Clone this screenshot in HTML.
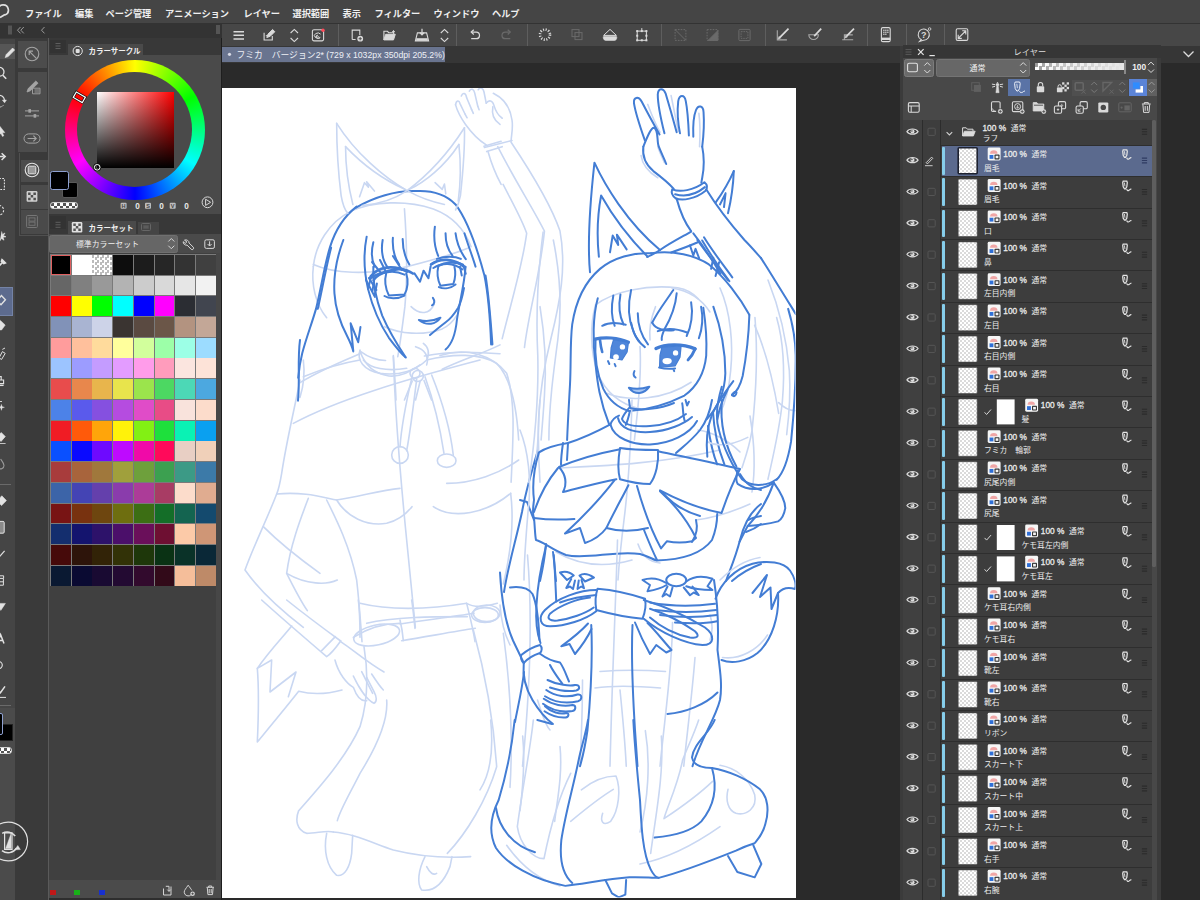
<!DOCTYPE html>
<html lang="ja"><head><meta charset="utf-8"><title>CLIP STUDIO PAINT</title>
<style>
html,body{margin:0;padding:0;background:#2a2a2a;}
body{width:1200px;height:900px;overflow:hidden;position:relative;font-family:"Liberation Sans",sans-serif;}
#app{position:absolute;left:0;top:0;width:1200px;height:900px;overflow:hidden;background:#2a2a2a;}
#app>div{position:absolute;box-sizing:border-box;}
svg{position:absolute;left:0;top:0;}
svg text{font-family:"Liberation Sans","Noto Sans CJK JP",sans-serif;}
</style></head><body>
<div id="app">
<div style="left:222px;top:88px;width:573.6px;height:809.6px;background:#ffffff;"></div>
<svg id="art" width="1200" height="900" viewBox="0 0 1200 900">
<defs><clipPath id="pg"><rect x="222" y="88" width="573.5" height="809.5"/></clipPath></defs>
<style>#art .lt path,#art .lt circle,#art .lt ellipse{fill:none;stroke:#c9d7f2;stroke-width:1.6;stroke-linecap:round;stroke-linejoin:round;vector-effect:non-scaling-stroke}#art .dk path,#art .dk circle,#art .dk ellipse{fill:none;stroke:#437dd4;stroke-width:2;stroke-linecap:round;stroke-linejoin:round;vector-effect:non-scaling-stroke}#art .md path{fill:none;stroke:#9fbcea;stroke-width:1.2;stroke-linecap:round;stroke-linejoin:round;vector-effect:non-scaling-stroke}</style>
<g clip-path="url(#pg)">
<!-- left figure head: tile origin (300,200) scale 1/4.5 -->
<g transform="translate(300 200) scale(.22222)">
<g class="lt">
<path d="M60,300 C70,200 130,100 230,50 C330,5 480,0 600,40 C680,70 740,130 770,210"/>
<path d="M60,300 C50,380 70,470 120,530"/>
<path d="M60,290 C150,330 300,340 480,300 C600,270 700,240 760,215"/>
<path d="M470,40 C478,150 488,300 472,480 C462,560 452,640 440,705"/>
<path d="M500,480 C540,520 585,512 602,472"/>
<path d="M380,570 C450,602 550,612 640,580 C670,565 690,545 705,520"/>
<path d="M270,680 C290,740 330,782 400,792 C450,797 500,772 540,742"/>
<path d="M270,680 C300,702 340,722 385,722"/>
<path d="M520,660 C560,672 582,702 570,742"/>
<circle cx="530" cy="792" r="25"/>
<path d="M0,822 C100,762 200,722 270,692"/>
<path d="M560,702 C650,682 760,680 900,692"/>
<path d="M640,762 C720,722 820,692 900,652"/>
<path d="M505,815 L470,900 M540,818 L520,900 M558,812 L592,900"/>
<path d="M420,700 C425,770 430,840 432,900"/>
</g>
<g class="dk">
<path d="M255,30 C200,72 160,132 135,212 C108,300 95,400 72,490 C52,560 28,620 10,690 C0,730 -5,765 -8,800"/>
<path d="M250,35 C330,-10 420,-45 530,-40 C600,-42 660,-20 700,20 C760,100 798,220 830,340 C848,430 856,540 860,650"/>
<path d="M745,300 C740,380 716,470 706,540 C700,600 682,650 655,673"/>
<path d="M195,180 C165,260 150,340 155,420 C160,500 190,570 212,612 C226,640 236,665 240,682 L228,555 L262,640 L272,572"/>
<path d="M300,165 C285,240 290,330 306,400 C326,480 360,560 400,620 C430,660 455,690 476,709"/>
<path d="M330,300 C326,370 340,440 370,520 C396,580 432,642 474,706"/>
<path d="M330,190 C320,230 322,270 336,300"/>
<path d="M372,180 C365,220 370,270 396,306"/>
<path d="M418,170 C415,215 425,260 446,290"/>
<path d="M462,175 C462,215 470,255 492,290"/>
<path d="M607,120 C600,170 605,210 622,252"/>
<path d="M655,150 C655,190 665,225 686,250"/>
<path d="M700,150 C705,190 720,230 746,266"/>
<path d="M740,150 C755,200 775,250 790,300"/>
<path d="M515,330 L540,368 L556,318 L578,352 L588,298"/>
<path d="M318,345 C350,300 420,290 482,322" style="stroke-width:2.8"/>
<path d="M330,362 C360,322 420,312 470,336"/>
<path d="M388,330 C380,360 385,400 400,430 L470,425 C486,400 488,360 478,330"/>
<path d="M380,432 C400,446 440,446 470,430"/>
<path d="M320,345 L306,400 M335,352 L326,410 M346,376 L336,430"/>
<path d="M590,290 C630,260 690,262 742,302" style="stroke-width:2.8"/>
<path d="M600,306 C640,280 690,282 730,312"/>
<path d="M622,300 C615,330 620,360 632,386 L690,378 C700,350 700,320 695,300"/>
<path d="M625,392 C650,402 680,396 700,380"/>
<path d="M735,295 L746,332 M720,300 L728,340"/>
<path d="M315,351 C360,328 405,315 450,310 C472,313 495,322 508,331" style="stroke-width:2.6"/>
<path d="M297,360 L337,436 M310,351 L344,405 M324,279 L364,328 M360,270 L387,324 M418,252 L459,315"/>
<path d="M621,297 C652,279 702,274 733,292" style="stroke-width:2.6"/>
<path d="M616,265 C652,252 697,252 724,265"/>
<path d="M738,396 C730,440 720,470 711,486 C690,520 670,540 657,549 C630,570 605,590 585,608"/>
<path d="M140,215 C118,300 100,400 80,490"/>
<path d="M835,340 C850,430 858,540 866,650"/>
<path d="M598,440 C607,452 607,468 594,474"/>
<path d="M535,540 C565,548 600,545 632,530 C612,560 570,568 535,540 Z"/>
</g>
</g>
<!-- left figure ears + raised hand (light): tile origin (300,80) scale 1/4.5 -->
<g transform="translate(300 80) scale(.22222)">
<g class="lt">
<path d="M165,195 C165,290 170,400 185,520 C192,560 202,585 215,600"/>
<path d="M165,195 C250,330 380,440 482,498 C540,530 600,550 650,560"/>
<path d="M205,300 C205,380 215,470 238,560"/>
<path d="M205,300 C300,400 400,460 472,492"/>
<path d="M740,215 C660,340 560,440 482,498 C420,540 340,560 280,565"/>
<path d="M740,215 C742,300 735,400 722,520 C716,550 708,570 700,585"/>
<path d="M715,290 C650,390 560,460 492,492"/>
<path d="M715,290 C725,380 722,470 712,545"/>
<path d="M268,525 L290,462 L308,482 L300,458 L335,500"/>
<path d="M608,462 L640,492 L650,468 L656,512"/>
<!-- hand -->
<path d="M700,112 C703,90 716,90 720,106 L742,152"/>
<path d="M726,72 C733,54 746,58 750,80 L772,132"/>
<path d="M762,50 C770,36 782,40 786,58 L800,118"/>
<path d="M802,44 C812,30 824,36 828,54 L838,104"/>
<path d="M700,112 C708,140 720,165 745,200 C770,235 800,268 838,292"/>
<path d="M838,104 C850,88 866,92 872,112 C880,140 892,160 910,172"/>
<path d="M868,120 C862,150 870,180 900,200"/>
<path d="M742,152 L752,170 M772,132 L780,150 M800,118 L806,134"/>
<path d="M828,298 L905,276 M840,322 L910,300"/>
<path d="M846,322 C860,372 878,420 905,470"/>
</g>
</g>
<!-- left figure body (light): tile origin (220,340) scale 1/3 -->
<g transform="translate(220 340) scale(.33333)">
<g class="lt">
<path d="M420,30 C410,60 430,90 480,100 C540,108 590,90 620,60 C630,40 625,20 610,10"/>
<path d="M430,60 C450,85 500,95 560,85"/>
<circle cx="585" cy="100" r="15"/>
<path d="M240,120 C225,200 200,300 185,400 C180,430 175,450 170,462"/>
<path d="M250,110 C300,90 360,70 420,60"/>
<path d="M620,60 C700,40 780,40 830,70 C870,110 890,200 896,300"/>
<path d="M220,250 C350,180 550,120 780,60"/>
<path d="M170,462 C250,455 300,470 350,480 C420,470 480,450 540,445"/>
<path d="M350,480 C380,530 440,560 500,550 C540,540 560,520 576,500"/>
<path d="M640,500 C700,540 800,520 872,460"/>
<path d="M680,430 C760,430 840,400 896,360"/>
<path d="M520,50 C525,200 540,400 560,600 C570,700 580,800 586,862"/>
<path d="M575,115 C560,180 545,250 540,320 M590,118 C580,200 570,280 560,332"/>
<circle cx="540" cy="345" r="25"/>
<path d="M615,110 C640,180 660,260 672,340 M635,105 C665,180 690,260 700,346"/>
<ellipse cx="680" cy="362" rx="28" ry="20"/>
<path d="M170,462 C140,540 100,620 75,690 C110,740 170,800 250,862"/>
<path d="M265,475 C240,540 210,620 200,700 C220,740 240,780 262,812"/>
<path d="M320,480 C350,540 390,620 410,720 C418,790 422,850 426,905"/>
<path d="M200,700 C260,735 320,735 352,720"/>
<path d="M872,460 C882,540 872,640 850,732"/>
<path d="M420,790 C500,810 620,810 740,790 C760,802 790,802 832,790"/>
<path d="M440,850 C520,830 640,830 742,830"/>
<ellipse cx="800" cy="820" rx="40" ry="25"/>
<path d="M400,892 C450,860 500,850 540,850"/>
<path d="M740,790 C750,830 760,870 765,905"/>
<path d="M250,60 C255,100 250,140 240,172"/>
<path d="M130,560 C170,600 230,650 300,700"/>
</g>
<g class="dk">
<path d="M240,0 C232,60 240,120 234,182"/>
</g>
</g>
<!-- misc (real coords) -->
<g class="dk">
<path d="M538,450 C532,470 526,490 522,512 C516,540 508,566 504,592"/>
<path d="M520,500 L527,502 L534,520"/>
<path d="M524,672 C522,690 518,706 515,722"/>
</g>
<!-- left figure lower body (light): tile origin (220,600) scale 1/3 -->
<g transform="translate(220 600) scale(.33333)">
<g class="lt">
<path d="M125,0 C180,50 250,110 320,170 C335,160 350,140 362,123"/>
<path d="M200,0 C250,40 310,85 362,123"/>
<path d="M305,152 L346,110"/>
<path d="M362,125 C400,150 445,190 492,216"/>
<path d="M345,180 C355,220 380,250 400,262 C410,290 425,305 440,302"/>
<path d="M400,228 C415,260 440,300 462,310 C472,305 470,290 462,275 L440,232"/>
<path d="M455,222 C470,245 482,262 490,270 M425,215 C438,240 448,262 458,280"/>
<path d="M215,78 C190,110 150,150 112,205 L155,180 L150,276 L228,216 L205,290"/>
<path d="M112,205 C118,280 115,360 112,426 C150,380 200,320 236,274 C280,285 330,280 366,270"/>
<path d="M415,0 C420,40 420,80 420,112"/>
<ellipse cx="470" cy="105" rx="70" ry="30" transform="rotate(-12 470 105)"/>
<path d="M540,72 C620,60 700,50 762,40 M545,122 C620,110 700,95 766,85"/>
<ellipse cx="795" cy="45" rx="40" ry="22"/>
<path d="M540,60 C545,80 548,100 550,122"/>
<path d="M575,0 C580,30 582,60 585,85"/>
<path d="M432,140 C445,220 445,300 420,380 C380,470 300,560 236,632 C225,660 230,690 260,700 C290,700 320,690 340,696"/>
<path d="M500,300 C505,360 470,440 420,520 C390,580 360,630 352,662"/>
<path d="M340,696 C400,700 460,730 520,750 C600,770 680,775 752,770"/>
<path d="M760,90 C790,200 820,350 830,500 C800,600 740,700 682,760"/>
<path d="M850,100 C870,250 880,400 870,562"/>
<path d="M320,700 C310,750 320,800 350,826 C375,830 390,800 395,760 L398,706"/>
<path d="M615,770 C595,810 590,850 605,870 C640,876 670,850 690,800 L696,770"/>
<path d="M620,800 C630,820 640,826 650,820"/>
</g>
</g>
<!-- left figure raised arm (light): tile origin (440,80) scale 1/2.25 -->
<g transform="translate(440 80) scale(.44444)">
<g class="lt">
<path d="M160,140 C200,200 250,280 270,340 C285,420 270,500 250,580 C235,640 225,700 222,760 C220,820 222,860 225,905"/>
<path d="M142,235 C165,280 185,315 195,345 C185,420 160,500 140,582"/>
<path d="M130,150 C165,220 210,290 235,340 C225,440 200,520 190,602"/>
<path d="M232,342 C222,420 215,520 220,620 C222,700 215,800 200,905"/>
<path d="M0,620 C60,600 120,620 150,660 C170,720 165,800 160,905"/>
<path d="M120,30 C140,40 158,60 162,90 C165,110 160,125 160,138"/>
<path d="M100,152 L162,136"/>
</g>
</g>
<!-- right figure raised hand, ears: tile origin (560,80) scale 1/4.5 -->
<g transform="translate(560 80) scale(.22222)">
<g class="lt">
<path d="M395,110 C410,150 430,200 450,235"/>
<path d="M500,70 C510,120 522,180 532,230"/>
<path d="M625,150 C632,200 630,260 628,300"/>
<path d="M365,340 C370,380 400,415 440,440"/>
<path d="M440,300 C450,330 460,350 470,372"/>
</g>
<g class="dk">
<path d="M382,272 C362,215 340,150 333,105 C330,78 352,70 368,98 C395,150 425,205 448,245"/>
<path d="M470,240 C455,180 440,110 440,65 C442,35 465,35 475,60 C490,110 510,180 525,235"/>
<path d="M540,240 C530,190 528,130 532,95 C538,65 560,65 566,95 C575,140 578,200 580,250"/>
<path d="M600,255 C598,210 602,160 612,135 C622,110 645,115 646,145 C650,200 645,260 640,300"/>
<path d="M375,300 C395,250 410,215 422,215 C442,220 436,260 442,292 C452,322 466,346 478,378"/>
<path d="M375,300 C370,340 385,380 420,410 C460,440 490,465 512,490"/>
<path d="M640,300 C650,350 648,400 640,440 L636,462"/>
<path d="M505,492 C540,506 600,498 650,460 C662,470 664,485 655,498 C610,535 550,545 520,532 C505,520 500,505 505,492"/>
<path d="M518,514 C560,526 610,516 652,482"/>
<path d="M525,535 C540,590 560,640 590,680"/>
<path d="M660,495 C700,560 760,640 830,720 C860,750 882,776 905,802"/>
<path d="M590,682 C560,700 500,730 450,765 C430,778 410,790 392,796"/>
<path d="M620,730 C580,748 540,762 500,776"/>
<path d="M585,745 L600,790 L610,760 L626,802"/>
<path d="M600,690 C640,740 680,800 722,872"/>
<path d="M640,722 C680,790 720,850 762,905"/>
<path d="M690,800 L680,850 M716,820 L700,882"/>
<!-- left ear -->
<path d="M135,865 C125,760 130,600 155,372 C200,470 300,640 450,765"/>
<path d="M175,795 C165,700 170,600 185,520 C230,600 300,700 395,796"/>
<path d="M225,775 L237,700 L262,742 L256,696 L300,762"/>
<!-- right ear -->
<path d="M782,410 C760,460 730,510 700,552"/>
<path d="M782,410 C780,470 770,540 756,600"/>
<path d="M745,510 L720,560 M745,510 L738,572"/>
</g>
</g>
<!-- right figure head: tile origin (540,240) scale 1/4.5 -->
<g transform="translate(540 240) scale(.22222)">
<g class="lt">
<path d="M250,292 C330,230 480,200 620,215 C660,222 690,240 712,265"/>
<path d="M250,292 C225,380 225,500 260,600 C290,680 360,740 450,760"/>
<path d="M450,480 C455,560 450,650 440,760 C436,800 430,850 425,900"/>
<path d="M300,690 C400,730 560,720 680,640"/>
<path d="M0,300 C20,420 30,560 20,700 C15,780 10,840 5,900"/>
<path d="M60,0 C90,150 100,300 80,450 C60,600 40,750 40,900"/>
<path d="M520,300 C500,350 490,400 495,450"/>
</g>
<g class="dk">
<path d="M500,60 C420,55 330,80 270,130 C200,190 160,280 145,380 C135,460 140,560 135,650 C130,740 125,820 122,900"/>
<path d="M500,60 C600,45 700,70 760,110 C830,165 900,260 942,336"/>
<path d="M260,262 C238,340 236,460 250,560 C258,640 268,720 312,832"/>
<path d="M250,445 C245,520 255,600 285,670 C310,720 350,755 402,770"/>
<path d="M402,770 C470,765 560,745 650,700 C705,660 740,600 748,520 C752,440 745,370 735,305"/>
<path d="M330,250 C320,300 322,350 336,386"/>
<path d="M362,245 C352,300 356,340 376,380"/>
<path d="M410,225 C395,290 395,350 420,410 C430,440 450,465 472,482"/>
<path d="M440,330 C440,380 455,430 486,470"/>
<path d="M410,372 C415,400 425,430 446,456"/>
<path d="M600,225 C570,270 530,320 505,372"/>
<path d="M615,240 C610,300 590,350 560,402 C552,420 545,436 548,450"/>
<path d="M505,372 C520,400 560,412 602,406"/>
<path d="M680,280 C690,330 680,390 660,432"/>
<path d="M725,300 C735,350 730,400 715,442"/>
<path d="M280,386 C310,370 350,372 386,381"/>
<path d="M530,410 C570,395 620,400 662,416"/>
<path d="M247,446 C290,436 350,438 398,460" style="stroke-width:3.2"/>
<path d="M270,450 C272,470 276,490 280,504" style="stroke-width:2.6"/>
<path d="M331,448 L398,461 L392,504 L369,540 L317,531 L320,486 Z" style="fill:#4f86da;stroke-width:1.2"/>
<path d="M306,545 L312,558 M336,558 L340,568"/>
<path d="M522,488 C560,468 640,464 698,490" style="stroke-width:3.4"/>
<path d="M698,490 C690,510 678,528 666,540" style="stroke-width:2.8"/>
<path d="M549,482 L635,477 L630,527 L608,567 L538,572 L540,518 Z" style="fill:#4f86da;stroke-width:1.2"/>
<path d="M536,574 C560,580 590,580 608,578 M600,580 L604,590"/>
<path d="M425,590 C420,600 420,612 430,619"/>
<path d="M400,665 C430,673 460,671 492,660 C470,692 430,702 400,665 Z" style="fill:#a8c6f2"/>
<path d="M405,768 C400,790 396,810 386,832"/>
<path d="M640,735 C645,760 642,790 652,816"/>
<path d="M655,720 L662,745 L670,728"/>
</g>
<g style="fill:#fff;stroke:none"><circle cx="371" cy="481" r="12"/><circle cx="342" cy="527" r="13"/><circle cx="610" cy="508" r="12"/><ellipse cx="572" cy="545" rx="21" ry="14"/></g>
</g>
<!-- right figure raised arm + right hair: tile origin (640,200) scale 1/3.75 -->
<g transform="translate(640 200) scale(.26667)">
<g class="lt">
<path d="M300,330 C340,420 350,540 340,640 C335,700 320,760 300,800"/>
<path d="M480,300 C520,400 550,520 560,640 C565,720 560,800 550,880"/>
<path d="M430,470 C470,560 500,680 520,800"/>
<path d="M120,330 C180,340 230,370 262,420"/>
<path d="M520,760 C540,780 560,790 582,790"/>
</g>
<g class="dk">
<path d="M410,432 C408,500 400,580 385,660 C375,700 360,722 345,732"/>
<path d="M454,218 C490,275 530,340 550,372 C562,392 574,410 584,428"/>
<path d="M275,400 C300,470 320,560 320,650 C318,720 290,780 250,822"/>
<path d="M215,150 C250,200 290,250 330,300 M240,140 C270,190 310,240 346,290"/>
<path d="M345,730 C352,720 360,715 362,722 C360,735 352,740 345,730 Z"/>
</g>
</g>
<!-- right figure collar, bow, cape: tile origin (520,400) scale 1/5 -->
<g transform="translate(520 400) scale(.2)">
<g class="lt">
<path d="M560,0 C555,200 545,400 520,600 C505,720 495,820 490,900"/>
<path d="M0,150 C40,250 60,400 40,560 C30,680 20,800 20,900"/>
<path d="M100,0 C90,100 95,200 80,300"/>
<path d="M200,340 C400,330 700,320 1000,250"/>
<path d="M880,600 C960,590 1060,560 1150,520"/>
<path d="M1150,80 C1170,200 1180,330 1160,460"/>
<path d="M180,760 C300,830 420,840 560,800"/>
<path d="M590,720 C610,780 650,810 700,815"/>
<path d="M890,150 C960,160 1040,200 1100,260"/>
</g>
<g class="dk">
<path d="M545,0 L550,40 C600,55 700,45 770,15"/>
<path d="M545,40 C530,60 515,75 510,95 C520,125 570,135 650,130 C730,125 790,100 830,70"/>
<path d="M490,90 C500,140 560,165 650,160 C740,155 820,120 860,85"/>
<path d="M495,78 C475,85 460,100 452,122 C470,190 560,225 650,222 C750,218 850,170 885,105"/>
<path d="M452,122 C400,150 320,190 240,215 C180,225 130,237 95,262 C70,340 60,420 70,500 C65,540 60,570 70,590"/>
<path d="M215,215 C210,250 205,290 205,322 M240,215 L235,300"/>
<path d="M190,340 C140,400 100,470 70,560"/>
<path d="M70,590 C140,600 200,600 272,595"/>
<path d="M70,590 C75,640 75,680 80,700 C120,710 160,750 230,775 C330,800 480,750 600,770 C640,780 660,795 682,802 C780,800 900,780 960,700 C980,650 986,600 986,570"/>
<!-- knot -->
<path d="M500,240 C490,300 490,360 500,396 C550,410 600,420 650,420 C680,380 695,310 690,250 C640,250 560,250 500,240 Z"/>
<!-- left loop -->
<path d="M500,246 C400,265 290,295 195,335 C230,375 235,420 215,460 C300,440 400,410 482,396"/>
<!-- right loop -->
<path d="M690,256 C800,280 950,310 1100,345 C1060,420 1030,500 1008,565 C900,545 790,500 700,452"/>
<!-- left tail -->
<path d="M472,402 C420,470 330,570 225,668 L300,640 L325,715 C370,700 410,670 432,640 C470,560 510,490 542,426"/>
<path d="M432,640 C500,660 580,655 640,640"/>
<!-- right tail -->
<path d="M585,430 C610,520 650,640 705,742 L735,706 C780,715 830,712 860,706 L880,690 C830,590 760,510 700,456"/>
<path d="M620,650 C640,700 660,750 685,800"/>
<path d="M880,600 C890,640 880,680 860,710"/>
<path d="M710,460 C760,520 830,560 900,580"/>
<!-- body sides -->
<path d="M130,720 C125,780 115,840 100,905"/>
<path d="M165,760 C170,800 175,850 180,905"/>
<!-- hair strands right -->
<path d="M940,130 C950,200 960,260 986,322"/>
<path d="M965,60 C970,150 990,240 1022,322"/>
<path d="M1010,0 C1000,100 1020,220 1082,332"/>
<path d="M780,265 C820,230 860,200 900,150 C930,110 950,60 960,0"/>
<path d="M1100,370 C1130,420 1160,440 1205,450"/>
<path d="M1205,520 C1150,560 1120,620 1100,700 C1080,780 1050,850 1030,905"/>
<path d="M1140,600 C1160,590 1180,585 1205,580 M1130,660 C1160,650 1180,640 1205,620"/>
<path d="M1205,820 C1150,840 1100,870 1060,905"/>
</g>
</g>
<!-- right figure waist, hand, sash, tail: tile origin (500,540) scale 1/4 -->
<g transform="translate(500 540) scale(.25)">
<g class="lt">
<path d="M470,0 C465,200 450,500 440,905"/>
<path d="M110,60 C130,300 120,600 90,905"/>
<path d="M330,560 C330,700 325,800 320,905"/>
<path d="M690,330 C690,500 660,700 640,905"/>
<path d="M400,526 C480,520 580,520 662,526"/>
<path d="M380,592 C460,580 560,585 642,592"/>
<path d="M0,260 C5,330 20,380 40,420"/>
<path d="M880,160 C930,110 980,80 1040,70"/>
<path d="M890,470 C960,480 1030,440 1070,380"/>
<path d="M150,640 C170,700 180,740 200,760"/>
<path d="M480,600 C490,700 500,800 505,905"/>
<path d="M780,470 C770,600 750,760 735,905"/>
<path d="M840,300 C850,330 850,370 840,400"/>
</g>
<g class="dk">
<path d="M185,20 C165,100 150,180 146,260 C142,320 150,380 162,412"/>
<path d="M215,60 C220,120 222,180 225,246"/>
<path d="M0,130 C5,220 20,330 52,402 C70,440 85,470 95,492"/>
<path d="M40,190 C80,185 112,190 130,216 C150,260 155,330 158,400"/>
<path d="M85,460 C110,440 140,425 160,420 C170,430 168,445 160,452 C135,460 110,475 95,492 C85,485 82,470 85,460 Z"/>
<path d="M95,492 C90,540 100,590 130,640 C160,690 190,720 212,736"/>
<path d="M160,455 C180,470 210,485 240,490 C255,510 265,540 276,566"/>
<path d="M200,500 C215,530 235,555 250,576"/>
<path d="M190,560 C230,580 280,585 300,580 C320,578 322,598 305,602 C270,608 230,600 200,590"/>
<path d="M185,600 C220,625 270,632 310,618 C330,615 330,640 312,645 C270,655 220,650 180,625"/>
<path d="M175,635 C210,660 255,668 290,660 C305,660 305,680 290,684 C250,690 205,680 172,655"/>
<path d="M180,665 C205,690 240,698 265,692 C278,692 276,708 262,710 C230,712 200,700 178,685"/>
<!-- small bows -->
<path d="M295,142 C280,128 258,124 240,130 L268,160 Z M318,142 C335,130 355,136 376,150 L340,166 Z"/>
<path d="M285,156 L265,192 L280,186 L292,196 L300,162 M315,162 L310,196 L325,186 L336,193 L326,160"/>
<path d="M665,172 C630,150 600,150 570,160 L600,180 L590,205 C620,200 650,190 666,180"/>
<path d="M745,166 C780,140 820,145 850,155 L830,185 L850,200 C810,200 770,195 745,185"/>
<ellipse cx="705" cy="160" rx="40" ry="25"/>
<path d="M670,186 L650,226 L665,216 L680,226 L690,190 M735,190 L760,221 L775,210 L795,220 L770,186"/>
<!-- sash -->
<path d="M390,195 C450,200 520,215 580,235 C585,260 580,290 570,315 C510,310 440,295 385,280 C380,250 382,220 390,195 Z"/>
<path d="M385,200 C320,200 230,230 180,280 C150,310 160,345 200,345 C260,345 340,320 385,285"/>
<path d="M360,230 C310,235 240,260 200,295 C185,315 200,325 230,322 C280,315 340,295 375,270"/>
<path d="M575,240 C640,260 740,300 820,350 C860,380 860,420 810,420 C740,415 640,370 575,315"/>
<path d="M600,275 C660,295 730,330 780,365 C800,385 790,395 760,390 C700,378 640,345 600,310"/>
<path d="M600,250 C680,265 780,265 860,255 M620,280 C700,290 790,290 865,280 M640,300 C710,310 800,310 868,300 M700,330 C760,335 820,335 868,325"/>
<path d="M385,220 C330,225 280,235 240,250"/>
<path d="M352,334 C320,370 280,400 245,425 L278,416 L300,456 C330,420 350,390 366,356"/>
<path d="M540,330 C560,380 580,420 600,456 L625,420 L665,450 L686,440 C650,400 620,360 590,332"/>
<!-- skirt panels -->
<path d="M365,340 C370,450 365,600 350,760 C340,830 330,870 320,905"/>
<path d="M530,340 C525,450 530,600 540,760 C545,830 548,870 550,905"/>
<!-- right body side + hip -->
<path d="M856,160 C870,250 875,350 870,440 C880,520 890,580 880,640 C860,720 800,800 770,905"/>
<path d="M670,696 C740,690 820,660 870,610"/>
<!-- tail -->
<path d="M862,235 C885,170 940,115 1010,95 C1070,80 1135,88 1160,122 C1180,150 1186,180 1180,196 C1155,188 1130,192 1112,212 C1118,300 1090,400 1030,452 C985,488 925,496 886,480"/>
<path d="M1010,212 L1068,140 L1040,228 L1082,190 L1086,276 L1112,212"/>
</g>
</g>
<!-- right figure skirt bottom: tile origin (480,720) scale 1/3.75 -->
<g transform="translate(480 720) scale(.26667)">
<g class="lt">
<path d="M40,0 C50,100 40,200 0,262"/>
<path d="M200,0 C190,100 160,250 140,400 C150,470 200,520 240,520 C260,420 290,300 340,200"/>
<path d="M160,60 C170,160 160,260 150,340"/>
<path d="M380,262 C420,230 470,210 510,210 C530,260 520,340 490,380 C460,400 450,380 460,350"/>
<path d="M340,380 C400,330 450,290 500,260"/>
<path d="M680,60 C690,200 660,350 640,500"/>
<path d="M620,40 C640,160 630,300 600,420"/>
<path d="M760,150 C740,250 700,330 690,370 C750,330 820,280 872,230"/>
<path d="M900,170 C960,180 1010,220 1030,280 C1040,330 1000,360 960,350 C930,340 920,300 930,260"/>
<path d="M100,470 C150,540 220,600 300,622"/>
<path d="M600,540 C700,520 800,470 900,400"/>
<path d="M300,100 C310,200 290,300 280,380"/>
<path d="M820,0 C800,60 770,120 760,150"/>
</g>
<g class="dk">
<path d="M130,0 C120,100 100,200 70,300 C40,360 30,420 60,480 C100,540 200,600 320,622 C400,612 480,596 560,590 C600,588 640,592 670,592 C760,570 860,530 960,490 C1000,470 1020,465 1030,462 C1040,450 1060,430 1070,390 C1085,340 1080,290 1050,260 C1000,220 930,190 870,180 C830,180 800,170 795,140 C800,90 860,50 880,0"/>
<path d="M60,330 C70,400 120,470 206,496"/>
<path d="M405,0 C395,60 380,100 370,150 C350,250 320,350 305,450 C298,520 310,580 346,611"/>
<path d="M575,0 C580,100 590,200 600,300 C605,400 610,500 640,560 C650,580 660,590 670,592"/>
<path d="M870,180 C890,250 880,320 830,380 C790,420 720,435 655,441"/>
<path d="M470,600 L495,650 L520,665 L545,655 L548,600"/>
<path d="M930,510 L965,570 L1030,590 L1055,540 L1025,470"/>
<path d="M215,0 L270,15"/>
</g>
</g>
<!-- right figure shoulder / upper arm: tile origin (690,280) scale 1/3.4636 -->
<g transform="translate(690 280) scale(.28871)">
<g class="lt">
<path d="M300,130 C320,200 330,300 320,420 C310,520 290,600 270,690"/>
<path d="M225,130 C235,250 230,380 215,520 C205,580 190,620 180,650"/>
<path d="M60,560 C100,580 150,570 200,545"/>
</g>
<g class="dk">
<path d="M340,100 C355,150 365,200 366,260 C367,340 362,440 350,560 C340,620 322,670 300,692"/>
<path d="M110,370 C95,420 85,470 100,520 C115,580 150,650 180,690 C210,715 260,718 300,690"/>
<path d="M150,350 C120,390 90,430 75,470 C60,510 55,560 60,612"/>
<path d="M130,380 C110,420 100,450 95,482"/>
<path d="M165,660 C160,680 160,700 165,706 C200,730 250,730 290,702 C310,730 330,760 330,790 C325,820 315,830 305,836 C270,846 230,850 200,852 C190,870 180,890 172,906"/>
<path d="M290,702 C270,760 240,810 200,852"/>
</g>
</g>
</g>

</svg>
<div style="left:0px;top:0px;width:1200px;height:23px;background:#454545;"></div>
<div style="left:0px;top:23px;width:1200px;height:23px;background:#333333;"></div>
<div style="left:222px;top:23.5px;width:978px;height:22.5px;background:#474747;"></div>
<div style="left:0px;top:46px;width:1200px;height:16.8px;background:#363636;"></div>
<div style="left:222px;top:47px;width:222.5px;height:15.4px;background:#69748f;"></div>
<div style="left:0px;top:38px;width:222px;height:862px;background:#3a3a3a;"></div>
<div style="left:0px;top:39px;width:15px;height:861px;background:#454545;"></div>
<div style="left:0px;top:44px;width:15px;height:15px;background:#565656;"></div>
<div style="left:0px;top:286.5px;width:13px;height:29px;background:#5d6b8e;border:1px solid #7483a6;border-left:none;"></div>
<div style="left:0px;top:708px;width:15px;height:192px;background:#4b4b4b;"></div>
<div style="left:0px;top:483.5px;width:11px;height:1px;background:#6a6a6a;"></div>
<div style="left:0px;top:705px;width:11px;height:1px;background:#6a6a6a;"></div>
<div style="left:18px;top:41px;width:28.5px;height:27px;background:#4c4c4c;"></div>
<div style="left:18px;top:72px;width:28.5px;height:80px;background:#4c4c4c;"></div>
<div style="left:21px;top:159.5px;width:27px;height:22px;background:#4c4c4c;"></div>
<div style="left:21px;top:185px;width:27px;height:24px;background:#4c4c4c;"></div>
<div style="left:21px;top:210px;width:27px;height:23.5px;background:#4a4a4a;"></div>
<div style="left:18.5px;top:153px;width:1px;height:82px;background:#505050;"></div>
<div style="left:18.5px;top:234.5px;width:29px;height:1px;background:#505050;"></div>
<div style="left:47.5px;top:38px;width:173.5px;height:862px;background:#4a4a4a;border-left:1px solid #5a5a5a;"></div>
<div style="left:48.5px;top:38px;width:172.5px;height:17px;background:#383838;"></div>
<div style="left:67.5px;top:44px;width:75px;height:11.5px;background:#4a4a4a;"></div>
<div style="left:50px;top:40px;width:16px;height:12.5px;background:#333333;"></div>
<div style="left:64.5px;top:59.5px;width:140px;height:140px;border-radius:50%;background:conic-gradient(from -60deg,#ff0000,#ffff00,#00ff00,#00ffff,#0000ff,#ff00ff,#ff0000);"></div>
<div style="left:76.7px;top:71.7px;width:115.6px;height:115.6px;border-radius:50%;background:#4a4a4a;"></div>
<div style="left:97px;top:91.5px;width:76.5px;height:76px;background:linear-gradient(to bottom,rgba(0,0,0,0),#000),linear-gradient(to right,#fff,#f00);"></div>
<div style="left:61.5px;top:182px;width:16.5px;height:15.5px;background:#000;border:1px solid #5a5a5a;border-radius:2px;"></div>
<div style="left:49.8px;top:171.3px;width:18.8px;height:18.5px;background:#000;border:1.5px solid #8ea0d0;border-radius:2.5px;"></div>
<div style="left:50.3px;top:201.7px;width:27.5px;height:7.7px;border:1px solid #cfcfcf;border-radius:3px;background:repeating-conic-gradient(#fff 0 25%,#555 0 50%) 0 0/6px 6px;"></div>
<div style="left:48.5px;top:214px;width:172.5px;height:20px;background:#383838;"></div>
<div style="left:50px;top:216px;width:16px;height:12.5px;background:#333333;"></div>
<div style="left:67.5px;top:220.5px;width:68px;height:13.5px;background:#4a4a4a;"></div>
<div style="left:137.5px;top:221.5px;width:21px;height:12.5px;background:#454545;"></div>
<div style="left:49px;top:234.5px;width:128.7px;height:18px;background:#666666;border-radius:2.5px;border:1px solid #707070;"></div>
<div style="left:48.5px;top:253.2px;width:172.5px;height:627px;background:#404040;"></div>
<div style="left:215.8px;top:253.2px;width:5.2px;height:627px;background:#474747;"></div>
<div style="left:50.2px;top:254.2px;width:166.2px;height:332.2px;background:#7a7a7a;"></div>
<div style="left:50.9px;top:254.8px;width:19.9px;height:19.9px;background:#000000;"></div>
<div style="left:71.63px;top:254.8px;width:19.9px;height:19.9px;background:#ffffff;"></div>
<div style="left:92.36px;top:254.80px;width:19.9px;height:19.9px;background:repeating-conic-gradient(#fff 0 25%,#bbb 0 50%) 0 0/5px 5px;"></div>
<div style="left:113.09px;top:254.8px;width:19.9px;height:19.9px;background:#0d0d0d;"></div>
<div style="left:133.82px;top:254.8px;width:19.9px;height:19.9px;background:#1c1c1c;"></div>
<div style="left:154.55px;top:254.8px;width:19.9px;height:19.9px;background:#262626;"></div>
<div style="left:175.28px;top:254.8px;width:19.9px;height:19.9px;background:#333333;"></div>
<div style="left:196.01px;top:254.8px;width:19.9px;height:19.9px;background:#404040;"></div>
<div style="left:50.9px;top:275.53px;width:19.9px;height:19.9px;background:#666666;"></div>
<div style="left:71.63px;top:275.53px;width:19.9px;height:19.9px;background:#808080;"></div>
<div style="left:92.36px;top:275.53px;width:19.9px;height:19.9px;background:#999999;"></div>
<div style="left:113.09px;top:275.53px;width:19.9px;height:19.9px;background:#b3b3b3;"></div>
<div style="left:133.82px;top:275.53px;width:19.9px;height:19.9px;background:#cccccc;"></div>
<div style="left:154.55px;top:275.53px;width:19.9px;height:19.9px;background:#d9d9d9;"></div>
<div style="left:175.28px;top:275.53px;width:19.9px;height:19.9px;background:#e6e6e6;"></div>
<div style="left:196.01px;top:275.53px;width:19.9px;height:19.9px;background:#f2f2f2;"></div>
<div style="left:50.9px;top:296.26px;width:19.9px;height:19.9px;background:#ff0000;"></div>
<div style="left:71.63px;top:296.26px;width:19.9px;height:19.9px;background:#ffff00;"></div>
<div style="left:92.36px;top:296.26px;width:19.9px;height:19.9px;background:#00ff00;"></div>
<div style="left:113.09px;top:296.26px;width:19.9px;height:19.9px;background:#00ffff;"></div>
<div style="left:133.82px;top:296.26px;width:19.9px;height:19.9px;background:#0000ff;"></div>
<div style="left:154.55px;top:296.26px;width:19.9px;height:19.9px;background:#ff00ff;"></div>
<div style="left:175.28px;top:296.26px;width:19.9px;height:19.9px;background:#2b2d33;"></div>
<div style="left:196.01px;top:296.26px;width:19.9px;height:19.9px;background:#41454f;"></div>
<div style="left:50.9px;top:316.99px;width:19.9px;height:19.9px;background:#8192b8;"></div>
<div style="left:71.63px;top:316.99px;width:19.9px;height:19.9px;background:#a9b4d2;"></div>
<div style="left:92.36px;top:316.99px;width:19.9px;height:19.9px;background:#cdd3e8;"></div>
<div style="left:113.09px;top:316.99px;width:19.9px;height:19.9px;background:#3a3431;"></div>
<div style="left:133.82px;top:316.99px;width:19.9px;height:19.9px;background:#5a4a41;"></div>
<div style="left:154.55px;top:316.99px;width:19.9px;height:19.9px;background:#6b5648;"></div>
<div style="left:175.28px;top:316.99px;width:19.9px;height:19.9px;background:#b39380;"></div>
<div style="left:196.01px;top:316.99px;width:19.9px;height:19.9px;background:#c3a797;"></div>
<div style="left:50.9px;top:337.72px;width:19.9px;height:19.9px;background:#ff9c9c;"></div>
<div style="left:71.63px;top:337.72px;width:19.9px;height:19.9px;background:#ffc09c;"></div>
<div style="left:92.36px;top:337.72px;width:19.9px;height:19.9px;background:#ffdb9c;"></div>
<div style="left:113.09px;top:337.72px;width:19.9px;height:19.9px;background:#ffff9c;"></div>
<div style="left:133.82px;top:337.72px;width:19.9px;height:19.9px;background:#d2ff9c;"></div>
<div style="left:154.55px;top:337.72px;width:19.9px;height:19.9px;background:#9cffa8;"></div>
<div style="left:175.28px;top:337.72px;width:19.9px;height:19.9px;background:#9cffe6;"></div>
<div style="left:196.01px;top:337.72px;width:19.9px;height:19.9px;background:#9cdcff;"></div>
<div style="left:50.9px;top:358.45px;width:19.9px;height:19.9px;background:#9cc4ff;"></div>
<div style="left:71.63px;top:358.45px;width:19.9px;height:19.9px;background:#9c9cff;"></div>
<div style="left:92.36px;top:358.45px;width:19.9px;height:19.9px;background:#c49cff;"></div>
<div style="left:113.09px;top:358.45px;width:19.9px;height:19.9px;background:#e39cff;"></div>
<div style="left:133.82px;top:358.45px;width:19.9px;height:19.9px;background:#ff9cea;"></div>
<div style="left:154.55px;top:358.45px;width:19.9px;height:19.9px;background:#ff9cbc;"></div>
<div style="left:175.28px;top:358.45px;width:19.9px;height:19.9px;background:#fbe5df;"></div>
<div style="left:196.01px;top:358.45px;width:19.9px;height:19.9px;background:#fde3d8;"></div>
<div style="left:50.9px;top:379.18px;width:19.9px;height:19.9px;background:#e84c4c;"></div>
<div style="left:71.63px;top:379.18px;width:19.9px;height:19.9px;background:#e8874c;"></div>
<div style="left:92.36px;top:379.18px;width:19.9px;height:19.9px;background:#e8b54c;"></div>
<div style="left:113.09px;top:379.18px;width:19.9px;height:19.9px;background:#e8e44c;"></div>
<div style="left:133.82px;top:379.18px;width:19.9px;height:19.9px;background:#9be44c;"></div>
<div style="left:154.55px;top:379.18px;width:19.9px;height:19.9px;background:#4cd862;"></div>
<div style="left:175.28px;top:379.18px;width:19.9px;height:19.9px;background:#4cd8b6;"></div>
<div style="left:196.01px;top:379.18px;width:19.9px;height:19.9px;background:#4ca8e0;"></div>
<div style="left:50.9px;top:399.91px;width:19.9px;height:19.9px;background:#4c82e8;"></div>
<div style="left:71.63px;top:399.91px;width:19.9px;height:19.9px;background:#5a5aec;"></div>
<div style="left:92.36px;top:399.91px;width:19.9px;height:19.9px;background:#8550e0;"></div>
<div style="left:113.09px;top:399.91px;width:19.9px;height:19.9px;background:#b54ce0;"></div>
<div style="left:133.82px;top:399.91px;width:19.9px;height:19.9px;background:#e04cc8;"></div>
<div style="left:154.55px;top:399.91px;width:19.9px;height:19.9px;background:#e84c86;"></div>
<div style="left:175.28px;top:399.91px;width:19.9px;height:19.9px;background:#f9e3dc;"></div>
<div style="left:196.01px;top:399.91px;width:19.9px;height:19.9px;background:#fcdccb;"></div>
<div style="left:50.9px;top:420.64px;width:19.9px;height:19.9px;background:#f01c24;"></div>
<div style="left:71.63px;top:420.64px;width:19.9px;height:19.9px;background:#ff5a0a;"></div>
<div style="left:92.36px;top:420.64px;width:19.9px;height:19.9px;background:#ffa50a;"></div>
<div style="left:113.09px;top:420.64px;width:19.9px;height:19.9px;background:#fff20a;"></div>
<div style="left:133.82px;top:420.64px;width:19.9px;height:19.9px;background:#82f014;"></div>
<div style="left:154.55px;top:420.64px;width:19.9px;height:19.9px;background:#1ee03c;"></div>
<div style="left:175.28px;top:420.64px;width:19.9px;height:19.9px;background:#0af2b4;"></div>
<div style="left:196.01px;top:420.64px;width:19.9px;height:19.9px;background:#0aa0f0;"></div>
<div style="left:50.9px;top:441.37px;width:19.9px;height:19.9px;background:#0a50ff;"></div>
<div style="left:71.63px;top:441.37px;width:19.9px;height:19.9px;background:#0a0aff;"></div>
<div style="left:92.36px;top:441.37px;width:19.9px;height:19.9px;background:#6e0aff;"></div>
<div style="left:113.09px;top:441.37px;width:19.9px;height:19.9px;background:#be0aff;"></div>
<div style="left:133.82px;top:441.37px;width:19.9px;height:19.9px;background:#f00aa8;"></div>
<div style="left:154.55px;top:441.37px;width:19.9px;height:19.9px;background:#ff0a5a;"></div>
<div style="left:175.28px;top:441.37px;width:19.9px;height:19.9px;background:#e8cfc4;"></div>
<div style="left:196.01px;top:441.37px;width:19.9px;height:19.9px;background:#f0d0b9;"></div>
<div style="left:50.9px;top:462.1px;width:19.9px;height:19.9px;background:#a83c3c;"></div>
<div style="left:71.63px;top:462.1px;width:19.9px;height:19.9px;background:#a8643c;"></div>
<div style="left:92.36px;top:462.1px;width:19.9px;height:19.9px;background:#a0783c;"></div>
<div style="left:113.09px;top:462.1px;width:19.9px;height:19.9px;background:#a0a03c;"></div>
<div style="left:133.82px;top:462.1px;width:19.9px;height:19.9px;background:#6ea03c;"></div>
<div style="left:154.55px;top:462.1px;width:19.9px;height:19.9px;background:#3ca050;"></div>
<div style="left:175.28px;top:462.1px;width:19.9px;height:19.9px;background:#3c9a86;"></div>
<div style="left:196.01px;top:462.1px;width:19.9px;height:19.9px;background:#3c7aa8;"></div>
<div style="left:50.9px;top:482.83px;width:19.9px;height:19.9px;background:#3c64a8;"></div>
<div style="left:71.63px;top:482.83px;width:19.9px;height:19.9px;background:#4444b4;"></div>
<div style="left:92.36px;top:482.83px;width:19.9px;height:19.9px;background:#6440ac;"></div>
<div style="left:113.09px;top:482.83px;width:19.9px;height:19.9px;background:#8a3cac;"></div>
<div style="left:133.82px;top:482.83px;width:19.9px;height:19.9px;background:#ac3c98;"></div>
<div style="left:154.55px;top:482.83px;width:19.9px;height:19.9px;background:#a83c64;"></div>
<div style="left:175.28px;top:482.83px;width:19.9px;height:19.9px;background:#fcdccb;"></div>
<div style="left:196.01px;top:482.83px;width:19.9px;height:19.9px;background:#e0ac90;"></div>
<div style="left:50.9px;top:503.56px;width:19.9px;height:19.9px;background:#781414;"></div>
<div style="left:71.63px;top:503.56px;width:19.9px;height:19.9px;background:#78320f;"></div>
<div style="left:92.36px;top:503.56px;width:19.9px;height:19.9px;background:#6e460f;"></div>
<div style="left:113.09px;top:503.56px;width:19.9px;height:19.9px;background:#6e6e0f;"></div>
<div style="left:133.82px;top:503.56px;width:19.9px;height:19.9px;background:#3c6e14;"></div>
<div style="left:154.55px;top:503.56px;width:19.9px;height:19.9px;background:#146e28;"></div>
<div style="left:175.28px;top:503.56px;width:19.9px;height:19.9px;background:#146450;"></div>
<div style="left:196.01px;top:503.56px;width:19.9px;height:19.9px;background:#144a6e;"></div>
<div style="left:50.9px;top:524.29px;width:19.9px;height:19.9px;background:#142e6e;"></div>
<div style="left:71.63px;top:524.29px;width:19.9px;height:19.9px;background:#14146e;"></div>
<div style="left:92.36px;top:524.29px;width:19.9px;height:19.9px;background:#2d126a;"></div>
<div style="left:113.09px;top:524.29px;width:19.9px;height:19.9px;background:#4b0f6a;"></div>
<div style="left:133.82px;top:524.29px;width:19.9px;height:19.9px;background:#6a0f5a;"></div>
<div style="left:154.55px;top:524.29px;width:19.9px;height:19.9px;background:#6e0f32;"></div>
<div style="left:175.28px;top:524.29px;width:19.9px;height:19.9px;background:#fccaa8;"></div>
<div style="left:196.01px;top:524.29px;width:19.9px;height:19.9px;background:#cf9676;"></div>
<div style="left:50.9px;top:545.02px;width:19.9px;height:19.9px;background:#460a0a;"></div>
<div style="left:71.63px;top:545.02px;width:19.9px;height:19.9px;background:#2d140a;"></div>
<div style="left:92.36px;top:545.02px;width:19.9px;height:19.9px;background:#322307;"></div>
<div style="left:113.09px;top:545.02px;width:19.9px;height:19.9px;background:#323207;"></div>
<div style="left:133.82px;top:545.02px;width:19.9px;height:19.9px;background:#1e370a;"></div>
<div style="left:154.55px;top:545.02px;width:19.9px;height:19.9px;background:#0a3214;"></div>
<div style="left:175.28px;top:545.02px;width:19.9px;height:19.9px;background:#0a3228;"></div>
<div style="left:196.01px;top:545.02px;width:19.9px;height:19.9px;background:#0a2837;"></div>
<div style="left:50.9px;top:565.75px;width:19.9px;height:19.9px;background:#0a1932;"></div>
<div style="left:71.63px;top:565.75px;width:19.9px;height:19.9px;background:#0a0a32;"></div>
<div style="left:92.36px;top:565.75px;width:19.9px;height:19.9px;background:#190a32;"></div>
<div style="left:113.09px;top:565.75px;width:19.9px;height:19.9px;background:#230a32;"></div>
<div style="left:133.82px;top:565.75px;width:19.9px;height:19.9px;background:#320a2d;"></div>
<div style="left:154.55px;top:565.75px;width:19.9px;height:19.9px;background:#320a19;"></div>
<div style="left:175.28px;top:565.75px;width:19.9px;height:19.9px;background:#f5be9a;"></div>
<div style="left:196.01px;top:565.75px;width:19.9px;height:19.9px;background:#be8a68;"></div>
<div style="left:50.9px;top:254.8px;width:19.9px;height:19.9px;background:transparent;border:1px solid #e06060;"></div>
<div style="left:48.5px;top:880px;width:172.5px;height:18px;background:#4b4b4b;"></div>
<div style="left:48.5px;top:898px;width:172.5px;height:2px;background:#2e2e2e;"></div>
<div style="left:221px;top:38px;width:1.2px;height:862px;background:#1e1e1e;"></div>
<div style="left:50px;top:889.5px;width:5.8px;height:5.8px;background:#c01818;"></div>
<div style="left:74.3px;top:889.5px;width:5.8px;height:5.8px;background:#18b018;"></div>
<div style="left:99px;top:889.5px;width:5.8px;height:5.8px;background:#1830d0;"></div>
<div style="left:1161.3px;top:62.8px;width:39px;height:838px;background:#2a2a2a;"></div>
<div style="left:337.5px;top:24px;width:1px;height:22px;background:#5e5e5e;"></div>
<div style="left:456.3px;top:24px;width:1px;height:22px;background:#5e5e5e;"></div>
<div style="left:526.8px;top:24px;width:1px;height:22px;background:#5e5e5e;"></div>
<div style="left:661.3px;top:24px;width:1px;height:22px;background:#5e5e5e;"></div>
<div style="left:764.5px;top:24px;width:1px;height:22px;background:#5e5e5e;"></div>
<div style="left:866.8px;top:24px;width:1px;height:22px;background:#5e5e5e;"></div>
<div style="left:905.5px;top:24px;width:1px;height:22px;background:#5e5e5e;"></div>
<div style="left:943.8px;top:24px;width:1px;height:22px;background:#5e5e5e;"></div>
<div style="left:-2px;top:724px;width:14.5px;height:17px;background:#000;border:1px solid #222;"></div>
<div style="left:-4px;top:712.5px;width:7px;height:22px;background:#000;border:1.3px solid #8ea0d0;border-radius:2px;"></div>
<div style="left:-3px;top:746.5px;width:15px;height:7.4px;border:1px solid #cfcfcf;border-radius:3px;background:repeating-conic-gradient(#fff 0 25%,#555 0 50%) 0 0/6px 6px;"></div>
<div style="left:899.8px;top:45.5px;width:4px;height:855px;background:#3b3b3b;"></div>
<div style="left:903px;top:45px;width:258px;height:855px;background:#484848;"></div>
<div style="left:903px;top:45px;width:258px;height:13px;background:#363636;"></div>
<div style="left:1157.3px;top:58px;width:4px;height:842px;background:#3b3b3b;"></div>
<div style="left:904.2px;top:58.6px;width:29.8px;height:18.6px;background:#6a6a6a;border:1px solid #7c7c7c;border-radius:2.5px;"></div>
<div style="left:936px;top:58.6px;width:94px;height:18.6px;background:#676767;border:1px solid #747474;border-radius:2.5px;"></div>
<div style="left:1034.5px;top:62.6px;width:89.5px;height:7px;background:linear-gradient(to right,rgba(232,232,232,0),rgba(232,232,232,.55) 30%,#e6e6e6 100%),repeating-conic-gradient(#ffffff 0 25%,#9a9a9a 0 50%) 0 0/7px 7px;"></div>
<div style="left:1124.4px;top:59.5px;width:1.8px;height:14.5px;background:#8a8a8a;"></div>
<div style="left:1008.3px;top:78.7px;width:21.4px;height:17.2px;background:#5a73a6;"></div>
<div style="left:1072px;top:79.5px;width:27.5px;height:16px;background:#4f4f4f;"></div>
<div style="left:1100px;top:79.5px;width:27.5px;height:16px;background:#4f4f4f;"></div>
<div style="left:1129px;top:78.7px;width:17.5px;height:17.2px;background:#5b84d8;"></div>
<div style="left:1146.5px;top:78.7px;width:10.5px;height:17.2px;background:#606060;"></div>
<div style="left:903px;top:119.8px;width:249px;height:780.2px;background:#3d3d3d;"></div>
<div style="left:903px;top:119.8px;width:19px;height:780.2px;background:#404040;"></div>
<div style="left:921.8px;top:119.8px;width:1px;height:780.2px;background:#2c2c2c;"></div>
<div style="left:940.2px;top:119.8px;width:1px;height:780.2px;background:#2c2c2c;"></div>
<div style="left:1152px;top:119.8px;width:5.3px;height:780.2px;background:#484848;"></div>
<div style="left:1152.3px;top:120.3px;width:3.4px;height:446.5px;background:#5e5e5e;border-radius:1.5px;"></div>
<div style="left:941.5px;top:144.8px;width:210.5px;height:31.4px;background:#5b6a8e;"></div>
<div style="left:941.2px;top:144.8px;width:210.8px;height:0.8px;background:#2e2e2e;"></div>
<div style="left:941.9px;top:147px;width:3.2px;height:27.6px;background:#86cdea;border-radius:1px;"></div>
<div style="left:941.2px;top:176.2px;width:210.8px;height:0.8px;background:#2e2e2e;"></div>
<div style="left:941.9px;top:178.4px;width:3.2px;height:27.6px;background:#86cdea;border-radius:1px;"></div>
<div style="left:941.2px;top:207.6px;width:210.8px;height:0.8px;background:#2e2e2e;"></div>
<div style="left:941.9px;top:209.8px;width:3.2px;height:27.6px;background:#86cdea;border-radius:1px;"></div>
<div style="left:941.2px;top:239px;width:210.8px;height:0.8px;background:#2e2e2e;"></div>
<div style="left:941.9px;top:241.2px;width:3.2px;height:27.6px;background:#86cdea;border-radius:1px;"></div>
<div style="left:941.2px;top:270.4px;width:210.8px;height:0.8px;background:#2e2e2e;"></div>
<div style="left:941.9px;top:272.6px;width:3.2px;height:27.6px;background:#86cdea;border-radius:1px;"></div>
<div style="left:941.2px;top:301.8px;width:210.8px;height:0.8px;background:#2e2e2e;"></div>
<div style="left:941.9px;top:304px;width:3.2px;height:27.6px;background:#86cdea;border-radius:1px;"></div>
<div style="left:941.2px;top:333.2px;width:210.8px;height:0.8px;background:#2e2e2e;"></div>
<div style="left:941.9px;top:335.4px;width:3.2px;height:27.6px;background:#86cdea;border-radius:1px;"></div>
<div style="left:941.2px;top:364.6px;width:210.8px;height:0.8px;background:#2e2e2e;"></div>
<div style="left:941.9px;top:366.8px;width:3.2px;height:27.6px;background:#86cdea;border-radius:1px;"></div>
<div style="left:941.2px;top:396px;width:210.8px;height:0.8px;background:#2e2e2e;"></div>
<div style="left:941.9px;top:398.2px;width:3.2px;height:27.6px;background:#86cdea;border-radius:1px;"></div>
<div style="left:941.2px;top:427.4px;width:210.8px;height:0.8px;background:#2e2e2e;"></div>
<div style="left:941.9px;top:429.6px;width:3.2px;height:27.6px;background:#86cdea;border-radius:1px;"></div>
<div style="left:941.2px;top:458.8px;width:210.8px;height:0.8px;background:#2e2e2e;"></div>
<div style="left:941.9px;top:461px;width:3.2px;height:27.6px;background:#86cdea;border-radius:1px;"></div>
<div style="left:941.2px;top:490.2px;width:210.8px;height:0.8px;background:#2e2e2e;"></div>
<div style="left:941.9px;top:492.4px;width:3.2px;height:27.6px;background:#86cdea;border-radius:1px;"></div>
<div style="left:941.2px;top:521.6px;width:210.8px;height:0.8px;background:#2e2e2e;"></div>
<div style="left:941.9px;top:523.8px;width:3.2px;height:27.6px;background:#86cdea;border-radius:1px;"></div>
<div style="left:941.2px;top:553px;width:210.8px;height:0.8px;background:#2e2e2e;"></div>
<div style="left:941.9px;top:555.2px;width:3.2px;height:27.6px;background:#86cdea;border-radius:1px;"></div>
<div style="left:941.2px;top:584.4px;width:210.8px;height:0.8px;background:#2e2e2e;"></div>
<div style="left:941.9px;top:586.6px;width:3.2px;height:27.6px;background:#86cdea;border-radius:1px;"></div>
<div style="left:941.2px;top:615.8px;width:210.8px;height:0.8px;background:#2e2e2e;"></div>
<div style="left:941.9px;top:618px;width:3.2px;height:27.6px;background:#86cdea;border-radius:1px;"></div>
<div style="left:941.2px;top:647.2px;width:210.8px;height:0.8px;background:#2e2e2e;"></div>
<div style="left:941.9px;top:649.4px;width:3.2px;height:27.6px;background:#86cdea;border-radius:1px;"></div>
<div style="left:941.2px;top:678.6px;width:210.8px;height:0.8px;background:#2e2e2e;"></div>
<div style="left:941.9px;top:680.8px;width:3.2px;height:27.6px;background:#86cdea;border-radius:1px;"></div>
<div style="left:941.2px;top:710px;width:210.8px;height:0.8px;background:#2e2e2e;"></div>
<div style="left:941.9px;top:712.2px;width:3.2px;height:27.6px;background:#86cdea;border-radius:1px;"></div>
<div style="left:941.2px;top:741.4px;width:210.8px;height:0.8px;background:#2e2e2e;"></div>
<div style="left:941.9px;top:743.6px;width:3.2px;height:27.6px;background:#86cdea;border-radius:1px;"></div>
<div style="left:941.2px;top:772.8px;width:210.8px;height:0.8px;background:#2e2e2e;"></div>
<div style="left:941.9px;top:775px;width:3.2px;height:27.6px;background:#86cdea;border-radius:1px;"></div>
<div style="left:941.2px;top:804.2px;width:210.8px;height:0.8px;background:#2e2e2e;"></div>
<div style="left:941.9px;top:806.4px;width:3.2px;height:27.6px;background:#86cdea;border-radius:1px;"></div>
<div style="left:941.2px;top:835.6px;width:210.8px;height:0.8px;background:#2e2e2e;"></div>
<div style="left:941.9px;top:837.8px;width:3.2px;height:27.6px;background:#86cdea;border-radius:1px;"></div>
<div style="left:941.2px;top:867px;width:210.8px;height:0.8px;background:#2e2e2e;"></div>
<div style="left:941.9px;top:869.2px;width:3.2px;height:27.6px;background:#86cdea;border-radius:1px;"></div>
<svg id="ui" width="1200" height="900" viewBox="0 0 1200 900">
<defs><pattern id="ck" width="4" height="4" patternUnits="userSpaceOnUse"><rect width="4" height="4" fill="#fff"/><rect width="2" height="2" fill="#dadada"/><rect x="2" y="2" width="2" height="2" fill="#dadada"/></pattern><g id="eye"><path d="M-5.6 0c2.2-3.4 9-3.4 11.2 0c-2.2 3.4-9 3.4-11.2 0z" fill="none" stroke="#dcdcdc" stroke-width="1.1"/><circle r="2" fill="#dcdcdc"/><circle cx="-.6" cy="-.6" r=".7" fill="#3d3d3d"/></g><g id="lty"><rect x="0" y="0" width="14" height="14" rx="1.6" fill="#f6f6f6"/><path d="M2.6 6.6a4 3.6 0 0 1 8 0z" fill="#f0a6a6"/><rect x="2" y="8" width="4.2" height="4.2" fill="#2f6fd6"/><rect x="7.4" y="7.6" width="5.4" height="5.2" rx=".8" fill="#333"/><rect x="8.6" y="8.8" width="3" height="2.8" fill="#f6f6f6"/></g><g id="rul"><path d="M-3.4-4.6h3.6l.5 1.4-.5 4.2-1.3 2h-1l-1.3-2-.5-4.2z" fill="none" stroke="#e4e4e4" stroke-width="1.25"/><path d="M-2.2-3.2l.6 3.8" stroke="#e4e4e4" stroke-width=".9"/><path d="M.2 3.2c.2 1.6 1 1.8 2 1.4 1.2-.4 1.2-1.8 2.6-1.2" fill="none" stroke="#e4e4e4" stroke-width="1.15"/></g><g id="hdl"><path d="M-2.6-2.4h5.2M-2.6 0h5.2M-2.6 2.4h5.2" stroke="#2b2b2b" stroke-width="1.1"/></g><g id="hdls"><path d="M-2.6-2.4h5.2M-2.6 0h5.2M-2.6 2.4h5.2" stroke="#2f3b62" stroke-width="1.1"/></g><g id="chk"><rect x="-3.6" y="-3.6" width="7.2" height="7.2" rx="1" fill="none" stroke="#555" stroke-width="1"/></g></defs>
<g fill="#f0f0f0"><text y="17.30" xml:space="preserve"><tspan x="25.00" font-size="9.20" font-weight="bold">ファイル</tspan></text></g>
<g fill="#f0f0f0"><text y="17.30" xml:space="preserve"><tspan x="75.00" font-size="9.20" font-weight="bold">編集</tspan></text></g>
<g fill="#f0f0f0"><text y="17.30" xml:space="preserve"><tspan x="105.50" font-size="9.20" font-weight="bold">ページ管理</tspan></text></g>
<g fill="#f0f0f0"><text y="17.30" xml:space="preserve"><tspan x="165.00" font-size="9.20" font-weight="bold">アニメーション</tspan></text></g>
<g fill="#f0f0f0"><text y="17.30" xml:space="preserve"><tspan x="243.50" font-size="9.20" font-weight="bold">レイヤー</tspan></text></g>
<g fill="#f0f0f0"><text y="17.30" xml:space="preserve"><tspan x="292.50" font-size="9.20" font-weight="bold">選択範囲</tspan></text></g>
<g fill="#f0f0f0"><text y="17.30" xml:space="preserve"><tspan x="342.50" font-size="9.20" font-weight="bold">表示</tspan></text></g>
<g fill="#f0f0f0"><text y="17.30" xml:space="preserve"><tspan x="374.50" font-size="9.20" font-weight="bold">フィルター</tspan></text></g>
<g fill="#f0f0f0"><text y="17.30" xml:space="preserve"><tspan x="433.50" font-size="9.20" font-weight="bold">ウィンドウ</tspan></text></g>
<g fill="#f0f0f0"><text y="17.30" xml:space="preserve"><tspan x="492.00" font-size="9.20" font-weight="bold">ヘルプ</tspan></text></g>
<path d="M-2 9.5a5.2 5.2 0 1 1 7 5.5M0 17.5l5 -3" fill="none" stroke="#e0e0e0" stroke-width="1.7"/>
<circle cx="229.5" cy="54.3" r="1.6" fill="#d8dbe6"/>
<g fill="#eef0f6"><text y="57.60" xml:space="preserve"><tspan x="236.50" font-size="8.80">フミカ　バージョン</tspan><tspan x="315.70" font-size="8.70" textLength="129.14" lengthAdjust="spacing">2* (729 x 1032px 350dpi 205.2%)</tspan></text></g>
<path d="M1183.5 51.5l5 5 5-5" fill="none" stroke="#dcdcdc" stroke-width="1.3"/>
<rect x="8" y="25.5" width="4" height="9" fill="#555"/>
<path d="M20.5 27l-3 3.2 3 3.2M23.8 27l-3 3.2 3 3.2M44.5 27l-3 3.2 3 3.2" fill="none" stroke="#9a9a9a" stroke-width="1"/>
<rect x="216" y="25" width="4" height="9" fill="#555"/>
<path d="M55.5 43.5h5M55.5 46h5M55.5 48.5h5" stroke="#5e5e5e" stroke-width="1"/>
<circle cx="77.7" cy="51" r="4.6" fill="none" stroke="#e0e0e0" stroke-width="1"/><rect x="75.7" y="49" width="4" height="4" rx="1" fill="#e0e0e0"/>
<g fill="#f0f0f0"><text y="54.30" xml:space="preserve"><tspan x="88.50" font-size="7.50" font-weight="bold">カラーサークル</tspan></text></g>
<g transform="translate(79.3 97.3) rotate(30)"><rect x="-5.2" y="-3.1" width="10.4" height="6.2" fill="none" stroke="#111" stroke-width="2.6"/><rect x="-5.2" y="-3.1" width="10.4" height="6.2" fill="none" stroke="#fff" stroke-width="1.2"/></g>
<circle cx="97.2" cy="167.3" r="2.8" fill="none" stroke="#111" stroke-width="2.4"/><circle cx="97.2" cy="167.3" r="2.8" fill="none" stroke="#fff" stroke-width="1"/>
<rect x="120.6" y="202.7" width="6" height="6" rx="1" fill="#bdbdbd"/>
<text x="123.6" y="207.9" font-size="5.6" font-weight="bold" fill="#444" text-anchor="middle">H</text>
<text x="137.5" y="209" font-size="8.2" font-weight="bold" fill="#e8e8e8" text-anchor="middle">0</text>
<rect x="145" y="202.7" width="6" height="6" rx="1" fill="#bdbdbd"/>
<text x="148" y="207.9" font-size="5.6" font-weight="bold" fill="#444" text-anchor="middle">S</text>
<text x="161.5" y="209" font-size="8.2" font-weight="bold" fill="#e8e8e8" text-anchor="middle">0</text>
<rect x="169.7" y="202.7" width="6" height="6" rx="1" fill="#bdbdbd"/>
<text x="172.7" y="207.9" font-size="5.6" font-weight="bold" fill="#444" text-anchor="middle">V</text>
<text x="186.5" y="209" font-size="8.2" font-weight="bold" fill="#e8e8e8" text-anchor="middle">0</text>
<circle cx="207.5" cy="202.3" r="5.4" fill="none" stroke="#d8d8d8" stroke-width="1"/><path d="M205.6 199.2l5 3.1-5 3.1z" fill="none" stroke="#d8d8d8" stroke-width="1"/>
<path d="M55.5 222.3h5M55.5 224.8h5M55.5 227.3h5" stroke="#5e5e5e" stroke-width="1"/>
<rect x="141.5" y="223.5" width="9" height="7" rx="1" fill="none" stroke="#666" stroke-width="1"/><rect x="143.3" y="225.3" width="5.4" height="3.4" fill="#5c5c5c"/>
<g transform="translate(71.8 222)"><rect width="10.5" height="10.5" rx="1.2" fill="#e2e2e2"/><path d="M1.5 1.5h2.5v2.5h-2.5zM6.5 1.5h2.5v2.5h-2.5zM4 4h2.5v2.5h-2.5zM1.5 6.5h2.5v2.5h-2.5zM6.5 6.5h2.5v2.5h-2.5z" fill="#555"/></g>
<g fill="#f0f0f0"><text y="230.80" xml:space="preserve"><tspan x="88.50" font-size="7.50" font-weight="bold">カラーセット</tspan></text></g>
<g fill="#f0f0f0"><text y="246.70" xml:space="preserve"><tspan x="75.90" font-size="7.90">標準カラーセット</tspan></text></g>
<path d="M168.3 241.5l3-3 3 3M168.3 245.7l3 3 3-3" fill="none" stroke="#d4d4d4" stroke-width="1"/>
<path d="M184.5 240.2a3.2 3.2 0 0 1 4.6 2.9l4.2 4.1a1.5 1.5 0 0 1-2.1 2.1l-4.1-4.2a3.2 3.2 0 0 1-3.9-3.4l2 1.8 1.7-1.6z" fill="none" stroke="#d8d8d8" stroke-width="1"/>
<rect x="204.8" y="239.8" width="9.6" height="8.6" rx="1.5" fill="none" stroke="#d8d8d8" stroke-width="1"/><path d="M209.6 241.3v4.6M207.6 244l2 2 2-2" fill="none" stroke="#d8d8d8" stroke-width="1"/>
<path d="M163.5 888.5v6.5h7.5v-8.5M165.8 886.3h3.2v5M167.3 889.6l1.7 1.8 1.7-1.8" fill="none" stroke="#d4d4d4" stroke-width="1"/>
<path d="M188.2 885.2c-2.2 3.2-4 5-4 7a4 4 0 0 0 7 2.4" fill="none" stroke="#d4d4d4" stroke-width="1"/><path d="M188.2 885.2c1.5 2.2 3 3.8 3.6 5.2" fill="none" stroke="#d4d4d4" stroke-width="1"/><circle cx="192.6" cy="893.7" r="2.3" fill="#d4d4d4"/><path d="M191.4 893.7h2.4M192.6 892.5v2.4" stroke="#444" stroke-width=".8"/>
<path d="M206.5 887.3h7.5M208.7 887.3v-1.3h3v1.3M207.3 887.6l.6 7h4.6l.6-7M209.2 889v4.3M211.2 889v4.3" fill="none" stroke="#d4d4d4" stroke-width="1"/>
<path d="M233.5 31.7h10.5M233.5 35.3h10.5M233.5 38.9h10.5" fill="none" stroke="#dadada" stroke-width="1.5" />
<g transform="translate(269.3 35.3)" ><path d="M-5.2-2.5v7.2h8.2v-4" fill="none" stroke="#dadada" stroke-width="1.1" /><path d="M-2.5 2.2l1.2-3.4 4.6-4.6 2.2 2.2-4.6 4.6z" fill="#dadada" stroke="#dadada" stroke-width="1" /><path d="M-3.5.4h2.2" fill="none" stroke="#dadada" stroke-width="1" /></g>
<path d="M290.6 33l3.7-3.6 3.7 3.6M290.6 38l3.7 3.6 3.7-3.6" fill="none" stroke="#dadada" stroke-width="1.1" />
<g transform="translate(318 35.3)" ><rect x="-5.6" y="-5.6" width="11.2" height="11.2" rx="1.6" fill="none" stroke="#dadada" stroke-width="1.1"/><path d="M2.6-1.2a3.4 2.6 0 1 0-.4 3.4a2.2 1.6 0 1 1-2.6-2.2a1.2 .9 0 1 0 1.2 1" fill="none" stroke="#dadada" stroke-width="1" /><circle cx="5" cy="-5" r="1.7" fill="#ff4a5a"/></g>
<g transform="translate(357 35.3)" ><path d="M-4.8 4.2v-9.4h7.6v5M-4.8 4.2h3.4" fill="none" stroke="#dadada" stroke-width="1.1" /><circle cx="3.2" cy="3.4" r="2.9" fill="#dadada"/><path d="M1.6 3.4h3.2M3.2 1.8v3.2" fill="none" stroke="#474747" stroke-width="0.9" /></g>
<g transform="translate(389.5 35.3)" ><path d="M-5.6 4.6v-8.6h3.6l1.2 1.4h5v2" fill="none" stroke="#dadada" stroke-width="1.1" /><path d="M-5.6 4.6l1.8-5.6h9.6l-1.8 5.6z" fill="#dadada" stroke="#dadada" stroke-width="1" /><path d="M4-5.2v3M2.5-3.7h3" fill="none" stroke="#dadada" stroke-width="0.9" /></g>
<g transform="translate(422 35.7)" ><path d="M-6.6 5.2l2-8h9.2l2 8z" fill="none" stroke="#dadada" stroke-width="1.1" /><path d="M-5.8 3.8h11.6" fill="none" stroke="#dadada" stroke-width="2.6" /><path d="M0-7v6M-2.2-3.2l2.2 2.4 2.2-2.4" fill="none" stroke="#dadada" stroke-width="1.2" /></g>
<path d="M440.8 33l3.7-3.6 3.7 3.6M440.8 38l3.7 3.6 3.7-3.6" fill="none" stroke="#dadada" stroke-width="1.1" />
<g transform="translate(475 35.3)" ><path d="M-3.2-3.2h4.4a3.3 3.3 0 0 1 0 6.6h-5" fill="none" stroke="#dadada" stroke-width="1.2" /><path d="M-1.2-5.6l-2.6 2.4 2.6 2.4" fill="none" stroke="#dadada" stroke-width="1.2" /></g>
<g transform="translate(506.5 35.3)" ><path d="M3.2-3.2h-4.4a3.3 3.3 0 0 0 0 6.6h5" fill="none" stroke="#6a6a6a" stroke-width="1.2" /><path d="M1.2-5.6l2.6 2.4-2.6 2.4" fill="none" stroke="#6a6a6a" stroke-width="1.2" /></g>
<circle cx="545" cy="34.6" r="5" fill="none" stroke="#dadada" stroke-width="2.6" stroke-dasharray="1.1 1.52"/>
<g transform="translate(577 34.6)" ><rect x="-5" y="-5" width="7" height="7" fill="none" stroke="#6a6a6a"/><rect x="-2" y="-2" width="7" height="7" fill="none" stroke="#6a6a6a"/></g>
<g transform="translate(610 34.6)" ><path d="M-6.4.8l6.4-6 6.4 6z" fill="none" stroke="#dadada" stroke-width="1" /><path d="M-6.4 1.8h12.8c.8 0 .6 3.8-1.8 4h-9c-2.4-.2-2.8-4-2-4z" fill="#dadada" stroke="#dadada" stroke-width="0.6" /></g>
<g transform="translate(641.8 35.5)" ><rect x="-4.6" y="-4.4" width="9.2" height="9.2" fill="none" stroke="#dadada" stroke-width="1"/><rect x="-5.6" y="-5.4" width="2" height="2" fill="#dadada"/><rect x="3.6" y="-5.4" width="2" height="2" fill="#dadada"/><rect x="-5.6" y="3.8" width="2" height="2" fill="#dadada"/><rect x="3.6" y="3.8" width="2" height="2" fill="#dadada"/><rect x="-1" y="-5.4" width="2" height="2" fill="#dadada"/><rect x="-1" y="3.8" width="2" height="2" fill="#dadada"/><rect x="-5.6" y="-0.8" width="2" height="2" fill="#dadada"/><rect x="3.6" y="-0.8" width="2" height="2" fill="#dadada"/><path d="M0-4.4v-3" fill="none" stroke="#dadada" stroke-width="1" /></g>
<g transform="translate(680.5 35)" ><rect x="-5.4" y="-5.4" width="10.8" height="10.8" fill="none" stroke="#6a6a6a" stroke-dasharray="1.6 1.2"/><path d="M-5.4-5.4l10.8 10.8" fill="none" stroke="#6a6a6a" stroke-width="1" /></g>
<g transform="translate(712.5 35)" ><rect x="-5.4" y="-5.4" width="10.8" height="10.8" fill="none" stroke="#6a6a6a" stroke-dasharray="1.6 1.2"/><path d="M5.4-4.4v9.8h-9.8z" fill="#6a6a6a" stroke="#6a6a6a" stroke-width="1" /></g>
<g transform="translate(744.5 35)" ><rect x="-5.6" y="-5.6" width="11.2" height="11.2" rx="1" fill="none" stroke="#6a6a6a"/><rect x="-3.4" y="-3.4" width="6.8" height="6.8" fill="none" stroke="#6a6a6a" stroke-dasharray="1.4 1"/></g>
<g transform="translate(782.5 34.5)" ><path d="M-5.2-4.2v9.6h9.6" fill="none" stroke="#a8a8a8" stroke-width="1.1" /><path d="M-2.6 2.8l8.6-8.6" fill="none" stroke="#dadada" stroke-width="1.7" /><path d="M-4.4 4.6l1-2.6 1.6 1.6z" fill="#dadada" stroke="#dadada" stroke-width="0.6" /></g>
<g transform="translate(815 34.5)" ><path d="M-6.2.2h9.6a4.8 4.8 0 0 1-9.6 0z" fill="none" stroke="#a8a8a8" stroke-width="1.1" /><path d="M-.8 1.6l7-7.4" fill="none" stroke="#dadada" stroke-width="1.7" /></g>
<g transform="translate(848 34.5)" ><path d="M-5.8 5.2h11M-3.6 5.2v-4.8h8.4" fill="none" stroke="#a8a8a8" stroke-width="1.1" /><path d="M-1.4 1.6l7.4-7.4" fill="none" stroke="#dadada" stroke-width="1.7" /><path d="M-3 3.4l.9-2.4 1.5 1.5z" fill="#dadada" stroke="#dadada" stroke-width="0.6" /></g>
<g transform="translate(885.8 34.6)" ><rect x="-4.4" y="-7" width="8.8" height="14" rx="1.4" fill="none" stroke="#dadada" stroke-width="1.1"/><path d="M-4.4 4.2h8.8" fill="none" stroke="#dadada" stroke-width="2.4" /><rect x="-2.6" y="-5" width="1.3" height="1.3" fill="#dadada"/><rect x="-2.6" y="-3" width="1.3" height="1.3" fill="#dadada"/><rect x="-2.6" y="-1" width="1.3" height="1.3" fill="#dadada"/><rect x="-0.6" y="-5" width="1.3" height="1.3" fill="#dadada"/><rect x="-0.6" y="-3" width="1.3" height="1.3" fill="#dadada"/><rect x="-0.6" y="-1" width="1.3" height="1.3" fill="#dadada"/><rect x="1.4" y="-5" width="1.3" height="1.3" fill="#dadada"/><rect x="1.4" y="-3" width="1.3" height="1.3" fill="#dadada"/></g>
<g transform="translate(923.8 34.6)" ><path d="M-2.6 5a5.6 5.6 0 1 1 2.2.6l-3.8 1.2z" fill="none" stroke="#dadada" stroke-width="1.1" /><text x="0" y="3.4" font-size="9" font-weight="bold" fill="#dadada" text-anchor="middle">?</text><circle cx="5.8" cy="-5.6" r="1.3" fill="none" stroke="#dadada" stroke-width=".8"/></g>
<g transform="translate(962 34.6)" ><rect x="-5.8" y="-5.8" width="11.6" height="11.6" rx="1.4" fill="none" stroke="#dadada" stroke-width="1.1"/><path d="M-3.6 3.6l7.2-7.2M.2-3.8h3.6v3.6M-.2 3.8h-3.6v-3.6" fill="none" stroke="#dadada" stroke-width="1.1" /></g>
<g transform="translate(32 54)" ><circle r="6.8" fill="none" stroke="#a4a4a4" stroke-width="1.1"/><path d="M-2.6-2.6l7.2 7.2M-2.8 1v-3.8h3.8" fill="none" stroke="#a4a4a4" stroke-width="1.2" /></g>
<g transform="translate(33 87)" ><path d="M-6 5l1.2-3.4 7.6-7.6 2.2 2.2-7.6 7.6z" fill="#a4a4a4" stroke="#a4a4a4" stroke-width="0.8" /><path d="M-.5 1.2h7.5v5.6h-7.5zM1.5 3h5M1.5 5h5" fill="none" stroke="#a4a4a4" stroke-width="0.9" /></g>
<g transform="translate(32 113.3)" ><path d="M-7-2.4h14M-7 2.6h14" fill="none" stroke="#a4a4a4" stroke-width="1" /><rect x="-3.6" y="-4.2" width="2.6" height="3.6" fill="#a4a4a4"/><rect x="1.6" y=".8" width="2.6" height="3.6" fill="#a4a4a4"/></g>
<g transform="translate(32 138.5)" ><rect x="-8" y="-4.6" width="16" height="9.2" rx="4.6" fill="none" stroke="#a4a4a4" stroke-width="1"/><path d="M-4.4 0h8.4M1.4-2.8l2.8 2.8-2.8 2.8" fill="none" stroke="#a4a4a4" stroke-width="1.1" /></g>
<g transform="translate(32 170)" ><circle r="6.8" fill="none" stroke="#e4e4e4" stroke-width="1.1"/><rect x="-3.8" y="-3.8" width="7.6" height="7.6" rx="1.2" fill="#9a9a9a" stroke="#e4e4e4" stroke-width="1"/></g>
<g transform="translate(26.6 191)" ><rect width="10.8" height="10.8" rx="1.2" fill="#cfcfcf"/><path d="M1.5 1.5h2.5v2.5h-2.5zM6.8 1.5h2.5v2.5h-2.5zM4.1 4.1h2.5v2.5h-2.5zM1.5 6.8h2.5v2.5h-2.5zM6.8 6.8h2.5v2.5h-2.5z" fill="#505050" stroke="none" stroke-width="0" /></g>
<g transform="translate(32 221.5)" ><rect x="-5.4" y="-6" width="10.8" height="12" rx="1" fill="none" stroke="#767676" stroke-width="1"/><rect x="-3" y="-3.6" width="6" height="3.2" fill="none" stroke="#767676" stroke-width=".9"/><rect x="-3" y=".6" width="6" height="3.2" fill="none" stroke="#767676" stroke-width=".9"/></g>
<g><path d="M5.2 57.6l1-3 6.4-6.6 2 2-6.4 6.6z" fill="#e2e2e2" stroke="#e2e2e2" stroke-width="0.6" /><circle cx="-.4" cy="71.8" r="4.4" fill="none" stroke="#e2e2e2" stroke-width="1.3"/><path d="M2.8 75.2l3.4 3.6" fill="none" stroke="#e2e2e2" stroke-width="1.6" /><path d="M-2 95.6a5 5 0 0 1 6.4 5.4" fill="none" stroke="#e2e2e2" stroke-width="1.2" /><path d="M2.4 100.2l2.2 2.6 1.8-2.8z" fill="#e2e2e2" stroke="#e2e2e2" stroke-width="0.5" /><path d="M3.6 105a5 5 0 0 1-4.6 2" fill="none" stroke="#e2e2e2" stroke-width="1" stroke-dasharray="1.4 1.2"/><path d="M0 126.4l4.8 6.2-2.4.2 1.4 3-1.4.6-1.4-3-1.6 1.4z" fill="#e2e2e2" stroke="#e2e2e2" stroke-width="0.5" /><path d="M-2 156.6h5.6M1.6 153.2l3.6 3.4-3.6 3.4" fill="none" stroke="#e2e2e2" stroke-width="1.5" /><rect x="-4" y="178.5" width="8.4" height="11" fill="none" stroke="#e2e2e2" stroke-width="1.1" stroke-dasharray="1.8 1.3"/><path d="M-1 205.4a4.6 4.8 0 0 1 0 9.6" fill="none" stroke="#e2e2e2" stroke-width="1.1" stroke-dasharray="2.2 1.4"/><path d="M1.6 231.4l.8 3 2.6-1.4-1.6 2.6 2.6 1.2-3 .4 1 3-2.6-1.8-1.6 2.6" fill="#e2e2e2" stroke="#e2e2e2" stroke-width="0.6" /><path d="M-1 266l4.2-4.2M2 259.6l3.4 3.4-1.6.6-2.4-2.4z" fill="none" stroke="#e2e2e2" stroke-width="1.6" /><path d="M-3 300.6l4.4-5 4 4.2-4.4 5z" fill="none" stroke="#e2e2e2" stroke-width="1.4" /><path d="M-3 323.6l3.4-3.2 4.8 4.6-3.6 5-4.6-.2z" fill="#e2e2e2" stroke="#e2e2e2" stroke-width="0.5" /><path d="M-1 358l3.4-6.4 2.8 1.8-3.6 6zM2.4 349.4l2.6-1.4" fill="none" stroke="#e2e2e2" stroke-width="1" /><path d="M-3 380h6.6v3.6h-6.6zM-1.4 380v-3.4h2.6v3.4" fill="none" stroke="#e2e2e2" stroke-width="1.1" /><path d="M-3 385.4h6.6" fill="none" stroke="#e2e2e2" stroke-width="1.3" /><path d="M1.4 404.2l.7 2.4 2.4.7-2.4.7-.7 2.4-.7-2.4-2.4-.7 2.4-.7z" fill="#e2e2e2" stroke="#e2e2e2" stroke-width="0.3" /><path d="M-1 401.5h3" fill="none" stroke="#e2e2e2" stroke-width="0.9" /><path d="M-3 437.4l4.2-4.8 4 4-4.2 4.8zM-3 443.5h8.6" fill="#e2e2e2" stroke="#e2e2e2" stroke-width="0.8" /><path d="M.6 459c2 2.8 3.4 4.4 3.4 6.4a3.6 3.6 0 0 1-5.4 3" fill="none" stroke="#9a9a9a" stroke-width="1.1" /><path d="M-3 500.8l4.8-5 4.6 4.8-4.8 5z" fill="#e2e2e2" stroke="#e2e2e2" stroke-width="0.6" /><rect x="-4" y="521.4" width="8.2" height="11.8" rx="1.2" fill="#8a8a8a" stroke="#e2e2e2" stroke-width="1"/><path d="M-1 557.2l5.6-6.4" fill="none" stroke="#e2e2e2" stroke-width="1.2" /><path d="M-3 578.4h6.4v6.8h-6.4zM-1 578.4v-2.6h4.6v2.6M-3 581.8h6.4" fill="none" stroke="#e2e2e2" stroke-width="1" /><path d="M-3 603.4h8.4l-4.6 7z" fill="#e2e2e2" stroke="#e2e2e2" stroke-width="0.5" /><path d="M-2.6 643.6l3.2-9 3.4 9M-1 640.6h3.6" fill="none" stroke="#e2e2e2" stroke-width="1.5" /><path d="M-2 661.4a4.2 3.6 0 0 1 0 7.4" fill="none" stroke="#e2e2e2" stroke-width="1.1" /><path d="M-2 690.4l2.4 2.4 4.6-6.4" fill="none" stroke="#e2e2e2" stroke-width="1.5" /><path d="M-3 697.4h9" fill="none" stroke="#e2e2e2" stroke-width="1" /></g>
<circle cx="8.2" cy="841.5" r="19.4" fill="none" stroke="#e0e0e0" stroke-width="1.2"/>
<path d="M4.6 832.8h7.4v16.6h-7.4z" fill="none" stroke="#e0e0e0" stroke-width="1.2" /><path d="M11 833.8v14.6h-5.4z" fill="#e0e0e0" stroke="#e0e0e0" stroke-width="0.4" /><path d="M2 850.6a10 10 0 0 0 14.6-2.4M15.2 836a10 10 0 0 0-13-2.6" fill="none" stroke="#e0e0e0" stroke-width="1.5" /><path d="M14.6 849.8l3.2-4.4 2.6 4.2z" fill="#e0e0e0" stroke="#e0e0e0" stroke-width="0.4" />
<g fill="#dedede"><text y="55.30" xml:space="preserve"><tspan x="1013.60" font-size="8.20">レイヤー</tspan></text></g>
<path d="M905.5 49.6h6M905.5 52h6M905.5 54.4h6" fill="none" stroke="#5a5a5a" stroke-width="1" />
<path d="M918 49.2l5.6 5.6M923.6 49.2l-5.6 5.6" fill="none" stroke="#e6e6e6" stroke-width="1.2" />
<path d="M929.4 55.6h5.4" fill="none" stroke="#e6e6e6" stroke-width="1.2" />
<rect x="907.6" y="63.2" width="9.8" height="8.6" rx="1.6" fill="none" stroke="#e0e0e0" stroke-width="1.1"/>
<path d="M924.3 65.6l3-3 3 3M924.3 70l3 3 3-3" fill="none" stroke="#dadada" stroke-width="1" />
<g fill="#f0f0f0"><text y="70.80" xml:space="preserve"><tspan x="969.50" font-size="8.00">通常</tspan></text></g>
<path d="M1020.2 65.6l3-3 3 3M1020.2 70l3 3 3-3" fill="none" stroke="#dadada" stroke-width="1" />
<text x="1132.2" y="69.7" font-size="8.4" font-weight="bold" fill="#f0f0f0">100</text>
<path d="M1148 65.1l3-3 3 3M1148 69.5l3 3 3-3" fill="none" stroke="#dadada" stroke-width="1" />
<g transform="translate(976.3 87.3)" ><rect x="-4.6" y="-4.6" width="7.6" height="7.6" fill="none" stroke="#5e5e5e"/><rect x="-2.4" y="-2.4" width="7" height="7" fill="#606060"/></g>
<g transform="translate(997.5 87.3)" ><path d="M-1.6 5.4l.9-7h1.4l.9 7zM-1.4-3.2h2.8v1.4h-2.8zM-1-3.6l1-1.6 1 1.6" fill="#dadada" stroke="#dadada" stroke-width="0.5" /><path d="M-5.6-3.2l3.2.6M-5.4-.2l3-.8M5.6-3.2l-3.2.6M5.4-.2l-3-.8" fill="none" stroke="#dadada" stroke-width="1" /></g>
<g transform="translate(1019.4 87)" ><path d="M-4.2-5h4.4l.6 1.6-.6 5-1.6 2.4h-1.2l-1.6-2.4-.6-5z" fill="none" stroke="#eef2fa" stroke-width="1" /><path d="M-2.6-3.2l.6 4.4" fill="none" stroke="#eef2fa" stroke-width="0.8" /><path d="M.2 4.2c.4 1.6 1.4 1.6 2.6 1.2 1.4-.4 1.4-1.8 2.8-1.2" fill="none" stroke="#eef2fa" stroke-width="1" /></g>
<g transform="translate(1040.5 87.3)" ><rect x="-3.7" y="-1" width="7.4" height="6" rx=".8" fill="#dadada"/><path d="M-2.2-1v-1.6a2.2 2.2 0 0 1 4.4 0v1.6" fill="none" stroke="#dadada" stroke-width="1.1" /></g>
<g transform="translate(1062.5 87.3)" ><rect x="-5.6" y=".2" width="5.6" height="4.8" rx=".6" fill="#dadada"/><path d="M-4.4.2v-1.2a1.6 1.6 0 0 1 3.2 0v1.2" fill="none" stroke="#dadada" stroke-width="1" /><rect x="-0.4" y="-5" width="2.3" height="2.3" fill="#dadada"/><rect x="4.2" y="-5" width="2.3" height="2.3" fill="#dadada"/><rect x="1.9" y="-2.7" width="2.3" height="2.3" fill="#dadada"/><rect x="-0.4" y="-0.4" width="2.3" height="2.3" fill="#dadada"/><rect x="4.2" y="-0.4" width="2.3" height="2.3" fill="#dadada"/><rect x="1.9" y="1.9" width="2.3" height="2.3" fill="#dadada"/></g>
<g transform="translate(1080 87.3)" ><rect x="-4.8" y="-4.6" width="8" height="7.6" rx="1" fill="none" stroke="#666" stroke-width="1.6"/><path d="M1.6 2.4l4 4M5.6 2.4l-4 4" fill="none" stroke="#666" stroke-width="1" /></g>
<path d="M1091.2 85.1l3-3 3 3M1091.2 89.5l3 3 3-3" fill="none" stroke="#7a7a7a" stroke-width="1" />
<g transform="translate(1108 87.3)" ><path d="M-5-4.8h8.6l-8.6 8.6z" fill="none" stroke="#666" stroke-width="1.4" /><path d="M1.6 2.4l4 4M5.6 2.4l-4 4" fill="none" stroke="#666" stroke-width="1" /></g>
<path d="M1119.3 85.1l3-3 3 3M1119.3 89.5l3 3 3-3" fill="none" stroke="#7a7a7a" stroke-width="1" />
<rect x="1135.6" y="86" width="7.4" height="6.6" fill="#ffffff"/><rect x="1132.4" y="82" width="7.6" height="7" fill="#2f8cff" stroke="#5b84d8" stroke-width=".8"/>
<path d="M1148.6 85.1l3-3 3 3M1148.6 89.5l3 3 3-3" fill="none" stroke="#9a9a9a" stroke-width="1" />
<g transform="translate(913.8 107.4)" ><rect x="-5.4" y="-4.8" width="10.8" height="9.6" rx="1.4" fill="none" stroke="#dadada" stroke-width="1.1"/><path d="M-5.4-1.4h10.8M-2.6-1.4v6.2" fill="none" stroke="#dadada" stroke-width="1" /></g>
<g transform="translate(996.3 107.4)" ><path d="M3.8 1v-5.4a1.2 1.2 0 0 0-1.2-1.2h-6.2a1.2 1.2 0 0 0-1.2 1.2v7.2a1.2 1.2 0 0 0 1.2 1.2h3.4" fill="none" stroke="#dadada" stroke-width="1.1" /><path d="M-4.6 1.4c1.2.2 2.2 1.2 2.4 2.4" fill="none" stroke="#dadada" stroke-width="0.9" /><circle cx="4" cy="4" r="2.4" fill="#dadada"/><path d="M2.5 4h3M4 2.5v3" fill="none" stroke="#484848" stroke-width="0.8" /></g>
<g transform="translate(1017.8 107.4)" ><rect x="-5.4" y="-5.6" width="10.4" height="9.8" rx="1.2" fill="none" stroke="#dadada" stroke-width="1.1"/><circle cx="-.2" cy="-.8" r="3" fill="none" stroke="#dadada" stroke-width="1"/><path d="M-.2-2.4v3.2M-1.6-.6l1.4 1.4 1.4-1.4" fill="none" stroke="#dadada" stroke-width="0.8" /><circle cx="4.4" cy="4.2" r="2.4" fill="#dadada"/><path d="M2.9 4.2h3M4.4 2.7v3" fill="none" stroke="#484848" stroke-width="0.8" /></g>
<g transform="translate(1039 107.4)" ><path d="M-5.8 3.6v-8.4h3.6l1.2 1.4h5.8v7z" fill="#dadada" stroke="#dadada" stroke-width="0.8" /><path d="M-5-2.2h9" fill="none" stroke="#484848" stroke-width="0.9" /><circle cx="4.8" cy="4.2" r="2.4" fill="#dadada"/><path d="M3.3 4.2h3M4.8 2.7v3" fill="none" stroke="#484848" stroke-width="0.8" /></g>
<g transform="translate(1060 107.4)" ><rect x="-1.6" y="-5.8" width="7.2" height="7.2" rx="1.4" fill="none" stroke="#dadada" stroke-width="1.1"/><rect x="-5.6" y="-1.4" width="7.2" height="7.2" rx="1.4" fill="#484848" stroke="#dadada" stroke-width="1.1"/><path d="M-3.2 2.2h2.4M-2 1v2.4" fill="none" stroke="#dadada" stroke-width="0.9" /><path d="M1.8-3.6v2.6M.6-2.2l1.2 1.4 1.2-1.4" fill="none" stroke="#dadada" stroke-width="0.8" /></g>
<g transform="translate(1081.7 107.4)" ><rect x="-1.6" y="-5.8" width="7.2" height="7.2" rx="1.4" fill="none" stroke="#dadada" stroke-width="1.1"/><rect x="-5.6" y="-1.4" width="7.2" height="7.2" rx="1.4" fill="#484848" stroke="#dadada" stroke-width="1.1"/><path d="M-3.4 3.6l2.6-2.6M-3.6 1.4v2.4h2.4" fill="none" stroke="#dadada" stroke-width="0.9" /></g>
<g transform="translate(1103.3 107.4)" ><rect x="-5" y="-5" width="10" height="10" rx="1.2" fill="#dadada"/><circle r="2.7" fill="#484848"/></g>
<g transform="translate(1125 107.4)" ><rect x="-6.2" y="-4.6" width="12.4" height="9" rx="1" fill="none" stroke="#646464" stroke-width="1"/><rect x="-.6" y="-2" width="5.4" height="5" fill="#646464"/><circle cx="-3.4" cy=".2" r="1.1" fill="#646464"/></g>
<g transform="translate(1146.3 107.4)" ><path d="M-4.4-3.4h8.8M-2-3.4v-1.4h4v1.4M-3.4-3l.7 8h5.4l.7-8M-1.1-1.4v4.8M1.1-1.4v4.8" fill="none" stroke="#dadada" stroke-width="1" /></g>
<use href="#eye" x="912.5" y="131.6"/>
<use href="#chk" x="931.6" y="131.8"/>
<path d="M946.6 132.2l2.8 2.8 2.8-2.8" fill="none" stroke="#d0d0d0" stroke-width="1.1" />
<g transform="translate(968.8 131.8)" ><path d="M-6.2 4.2v-8.2h3.6l1.2 1.4h5.6v2" fill="none" stroke="#dcdcdc" stroke-width="1" /><path d="M-6.2 4.2l1.8-4.8h10.8l-1.8 4.8z" fill="#dcdcdc" stroke="#dcdcdc" stroke-width="0.8" /></g>
<g fill="#ececec"><text y="131.00" xml:space="preserve"><tspan x="982.50" font-size="8.30" stroke="#ececec" stroke-width="0.28" textLength="28.15" lengthAdjust="spacing">100 %  </tspan><tspan x="1010.65" font-size="7.80">通常</tspan></text></g>
<g fill="#ececec"><text y="140.60" xml:space="preserve"><tspan x="982.80" font-size="7.60">ラフ</tspan></text></g>
<use href="#hdl" x="1144.5" y="131.8"/>
<use href="#eye" x="912.5" y="160.1"/>
<path d="M926.2 162.7l5.4-5.6 1.2 1.2-5.4 5.6zM925 165.7h7.6" fill="none" stroke="#dcdcdc" stroke-width="0.9" />
<rect x="958.2" y="147.7" width="19" height="26" rx="1" fill="url(#ck)" stroke="#1e2230" stroke-width="1.6"/>
<use href="#lty" transform="translate(987.7 147.6) scale(.92)"/>
<g fill="#ececec"><text y="157.20" xml:space="preserve"><tspan x="1003.30" font-size="8.30" stroke="#ececec" stroke-width="0.28" textLength="28.15" lengthAdjust="spacing">100 %  </tspan><tspan x="1031.45" font-size="7.80">通常</tspan></text></g>
<g fill="#ececec"><text y="170.70" xml:space="preserve"><tspan x="984.00" font-size="7.80">眉毛</tspan></text></g>
<use href="#rul" x="1126.6" y="154.4"/>
<use href="#hdls" x="1144.5" y="160.5"/>
<use href="#eye" x="912.5" y="191.5"/>
<use href="#chk" x="931.6" y="191.9"/>
<rect x="958.2" y="179.1" width="19" height="26" rx="1" fill="url(#ck)" stroke="#4a4a4a" stroke-width="0.6"/>
<use href="#lty" transform="translate(987.7 179.0) scale(.92)"/>
<g fill="#ececec"><text y="188.60" xml:space="preserve"><tspan x="1003.30" font-size="8.30" stroke="#ececec" stroke-width="0.28" textLength="28.15" lengthAdjust="spacing">100 %  </tspan><tspan x="1031.45" font-size="7.80">通常</tspan></text></g>
<g fill="#ececec"><text y="202.10" xml:space="preserve"><tspan x="984.00" font-size="7.80">眉毛</tspan></text></g>
<use href="#rul" x="1126.6" y="185.8"/>
<use href="#hdl" x="1144.5" y="191.9"/>
<use href="#eye" x="912.5" y="222.9"/>
<use href="#chk" x="931.6" y="223.3"/>
<rect x="958.2" y="210.5" width="19" height="26" rx="1" fill="url(#ck)" stroke="#4a4a4a" stroke-width="0.6"/>
<use href="#lty" transform="translate(987.7 210.4) scale(.92)"/>
<g fill="#ececec"><text y="220.00" xml:space="preserve"><tspan x="1003.30" font-size="8.30" stroke="#ececec" stroke-width="0.28" textLength="28.15" lengthAdjust="spacing">100 %  </tspan><tspan x="1031.45" font-size="7.80">通常</tspan></text></g>
<g fill="#ececec"><text y="233.50" xml:space="preserve"><tspan x="984.00" font-size="7.80">口</tspan></text></g>
<use href="#rul" x="1126.6" y="217.2"/>
<use href="#hdl" x="1144.5" y="223.3"/>
<use href="#eye" x="912.5" y="254.3"/>
<use href="#chk" x="931.6" y="254.7"/>
<rect x="958.2" y="241.9" width="19" height="26" rx="1" fill="url(#ck)" stroke="#4a4a4a" stroke-width="0.6"/>
<use href="#lty" transform="translate(987.7 241.8) scale(.92)"/>
<g fill="#ececec"><text y="251.40" xml:space="preserve"><tspan x="1003.30" font-size="8.30" stroke="#ececec" stroke-width="0.28" textLength="28.15" lengthAdjust="spacing">100 %  </tspan><tspan x="1031.45" font-size="7.80">通常</tspan></text></g>
<g fill="#ececec"><text y="264.90" xml:space="preserve"><tspan x="984.00" font-size="7.80">鼻</tspan></text></g>
<use href="#rul" x="1126.6" y="248.6"/>
<use href="#hdl" x="1144.5" y="254.7"/>
<use href="#eye" x="912.5" y="285.7"/>
<use href="#chk" x="931.6" y="286.1"/>
<rect x="958.2" y="273.3" width="19" height="26" rx="1" fill="url(#ck)" stroke="#4a4a4a" stroke-width="0.6"/>
<use href="#lty" transform="translate(987.7 273.2) scale(.92)"/>
<g fill="#ececec"><text y="282.80" xml:space="preserve"><tspan x="1003.30" font-size="8.30" stroke="#ececec" stroke-width="0.28" textLength="28.15" lengthAdjust="spacing">100 %  </tspan><tspan x="1031.45" font-size="7.80">通常</tspan></text></g>
<g fill="#ececec"><text y="296.30" xml:space="preserve"><tspan x="984.00" font-size="7.80">左目内側</tspan></text></g>
<use href="#rul" x="1126.6" y="280.0"/>
<use href="#hdl" x="1144.5" y="286.1"/>
<use href="#eye" x="912.5" y="317.1"/>
<use href="#chk" x="931.6" y="317.5"/>
<rect x="958.2" y="304.7" width="19" height="26" rx="1" fill="url(#ck)" stroke="#4a4a4a" stroke-width="0.6"/>
<use href="#lty" transform="translate(987.7 304.6) scale(.92)"/>
<g fill="#ececec"><text y="314.20" xml:space="preserve"><tspan x="1003.30" font-size="8.30" stroke="#ececec" stroke-width="0.28" textLength="28.15" lengthAdjust="spacing">100 %  </tspan><tspan x="1031.45" font-size="7.80">通常</tspan></text></g>
<g fill="#ececec"><text y="327.70" xml:space="preserve"><tspan x="984.00" font-size="7.80">左目</tspan></text></g>
<use href="#rul" x="1126.6" y="311.4"/>
<use href="#hdl" x="1144.5" y="317.5"/>
<use href="#eye" x="912.5" y="348.5"/>
<use href="#chk" x="931.6" y="348.9"/>
<rect x="958.2" y="336.1" width="19" height="26" rx="1" fill="url(#ck)" stroke="#4a4a4a" stroke-width="0.6"/>
<use href="#lty" transform="translate(987.7 336.0) scale(.92)"/>
<g fill="#ececec"><text y="345.60" xml:space="preserve"><tspan x="1003.30" font-size="8.30" stroke="#ececec" stroke-width="0.28" textLength="28.15" lengthAdjust="spacing">100 %  </tspan><tspan x="1031.45" font-size="7.80">通常</tspan></text></g>
<g fill="#ececec"><text y="359.10" xml:space="preserve"><tspan x="984.00" font-size="7.80">右目内側</tspan></text></g>
<use href="#rul" x="1126.6" y="342.8"/>
<use href="#hdl" x="1144.5" y="348.9"/>
<use href="#eye" x="912.5" y="379.9"/>
<use href="#chk" x="931.6" y="380.3"/>
<rect x="958.2" y="367.5" width="19" height="26" rx="1" fill="url(#ck)" stroke="#4a4a4a" stroke-width="0.6"/>
<use href="#lty" transform="translate(987.7 367.4) scale(.92)"/>
<g fill="#ececec"><text y="377.00" xml:space="preserve"><tspan x="1003.30" font-size="8.30" stroke="#ececec" stroke-width="0.28" textLength="28.15" lengthAdjust="spacing">100 %  </tspan><tspan x="1031.45" font-size="7.80">通常</tspan></text></g>
<g fill="#ececec"><text y="390.50" xml:space="preserve"><tspan x="984.00" font-size="7.80">右目</tspan></text></g>
<use href="#rul" x="1126.6" y="374.2"/>
<use href="#hdl" x="1144.5" y="380.3"/>
<use href="#eye" x="912.5" y="411.3"/>
<use href="#chk" x="931.6" y="411.7"/>
<rect x="958.2" y="398.9" width="19" height="26" rx="1" fill="url(#ck)" stroke="#4a4a4a" stroke-width="0.6"/>
<path d="M984.6 412.3l2 2.2 4.4-5" fill="none" stroke="#d8d8d8" stroke-width="1" />
<rect x="996.8" y="399.4" width="17.8" height="25" fill="#ffffff"/>
<use href="#lty" transform="translate(1025.2 398.8) scale(.92)"/>
<g fill="#ececec"><text y="408.40" xml:space="preserve"><tspan x="1040.80" font-size="8.30" stroke="#ececec" stroke-width="0.28" textLength="28.15" lengthAdjust="spacing">100 %  </tspan><tspan x="1068.95" font-size="7.80">通常</tspan></text></g>
<g fill="#ececec"><text y="421.90" xml:space="preserve"><tspan x="1021.50" font-size="7.80">髪</tspan></text></g>
<use href="#rul" x="1126.6" y="405.6"/>
<use href="#hdl" x="1144.5" y="411.7"/>
<use href="#eye" x="912.5" y="442.7"/>
<use href="#chk" x="931.6" y="443.1"/>
<rect x="958.2" y="430.3" width="19" height="26" rx="1" fill="url(#ck)" stroke="#4a4a4a" stroke-width="0.6"/>
<use href="#lty" transform="translate(987.7 430.2) scale(.92)"/>
<g fill="#ececec"><text y="439.80" xml:space="preserve"><tspan x="1003.30" font-size="8.30" stroke="#ececec" stroke-width="0.28" textLength="28.15" lengthAdjust="spacing">100 %  </tspan><tspan x="1031.45" font-size="7.80">通常</tspan></text></g>
<g fill="#ececec"><text y="453.30" xml:space="preserve"><tspan x="984.00" font-size="7.80">フミカ　輪郭</tspan></text></g>
<use href="#rul" x="1126.6" y="437.0"/>
<use href="#hdl" x="1144.5" y="443.1"/>
<use href="#eye" x="912.5" y="474.1"/>
<use href="#chk" x="931.6" y="474.5"/>
<rect x="958.2" y="461.7" width="19" height="26" rx="1" fill="url(#ck)" stroke="#4a4a4a" stroke-width="0.6"/>
<use href="#lty" transform="translate(987.7 461.6) scale(.92)"/>
<g fill="#ececec"><text y="471.20" xml:space="preserve"><tspan x="1003.30" font-size="8.30" stroke="#ececec" stroke-width="0.28" textLength="28.15" lengthAdjust="spacing">100 %  </tspan><tspan x="1031.45" font-size="7.80">通常</tspan></text></g>
<g fill="#ececec"><text y="484.70" xml:space="preserve"><tspan x="984.00" font-size="7.80">尻尾内側</tspan></text></g>
<use href="#rul" x="1126.6" y="468.4"/>
<use href="#hdl" x="1144.5" y="474.5"/>
<use href="#eye" x="912.5" y="505.5"/>
<use href="#chk" x="931.6" y="505.9"/>
<rect x="958.2" y="493.1" width="19" height="26" rx="1" fill="url(#ck)" stroke="#4a4a4a" stroke-width="0.6"/>
<use href="#lty" transform="translate(987.7 493.0) scale(.92)"/>
<g fill="#ececec"><text y="502.60" xml:space="preserve"><tspan x="1003.30" font-size="8.30" stroke="#ececec" stroke-width="0.28" textLength="28.15" lengthAdjust="spacing">100 %  </tspan><tspan x="1031.45" font-size="7.80">通常</tspan></text></g>
<g fill="#ececec"><text y="516.10" xml:space="preserve"><tspan x="984.00" font-size="7.80">尻尾</tspan></text></g>
<use href="#rul" x="1126.6" y="499.8"/>
<use href="#hdl" x="1144.5" y="505.9"/>
<use href="#eye" x="912.5" y="536.9"/>
<use href="#chk" x="931.6" y="537.3"/>
<rect x="958.2" y="524.5" width="19" height="26" rx="1" fill="url(#ck)" stroke="#4a4a4a" stroke-width="0.6"/>
<path d="M984.6 537.9l2 2.2 4.4-5" fill="none" stroke="#d8d8d8" stroke-width="1" />
<rect x="996.8" y="525.0" width="17.8" height="25" fill="#ffffff"/>
<use href="#lty" transform="translate(1025.2 524.4) scale(.92)"/>
<g fill="#ececec"><text y="534.00" xml:space="preserve"><tspan x="1040.80" font-size="8.30" stroke="#ececec" stroke-width="0.28" textLength="28.15" lengthAdjust="spacing">100 %  </tspan><tspan x="1068.95" font-size="7.80">通常</tspan></text></g>
<g fill="#ececec"><text y="547.50" xml:space="preserve"><tspan x="1021.50" font-size="7.80">ケモ耳左内側</tspan></text></g>
<use href="#rul" x="1126.6" y="531.2"/>
<use href="#hdl" x="1144.5" y="537.3"/>
<use href="#eye" x="912.5" y="568.3"/>
<use href="#chk" x="931.6" y="568.7"/>
<rect x="958.2" y="555.9" width="19" height="26" rx="1" fill="url(#ck)" stroke="#4a4a4a" stroke-width="0.6"/>
<path d="M984.6 569.3l2 2.2 4.4-5" fill="none" stroke="#d8d8d8" stroke-width="1" />
<rect x="996.8" y="556.4" width="17.8" height="25" fill="#ffffff"/>
<use href="#lty" transform="translate(1025.2 555.8) scale(.92)"/>
<g fill="#ececec"><text y="565.40" xml:space="preserve"><tspan x="1040.80" font-size="8.30" stroke="#ececec" stroke-width="0.28" textLength="28.15" lengthAdjust="spacing">100 %  </tspan><tspan x="1068.95" font-size="7.80">通常</tspan></text></g>
<g fill="#ececec"><text y="578.90" xml:space="preserve"><tspan x="1021.50" font-size="7.80">ケモ耳左</tspan></text></g>
<use href="#rul" x="1126.6" y="562.6"/>
<use href="#hdl" x="1144.5" y="568.7"/>
<use href="#eye" x="912.5" y="599.7"/>
<use href="#chk" x="931.6" y="600.1"/>
<rect x="958.2" y="587.3" width="19" height="26" rx="1" fill="url(#ck)" stroke="#4a4a4a" stroke-width="0.6"/>
<use href="#lty" transform="translate(987.7 587.2) scale(.92)"/>
<g fill="#ececec"><text y="596.80" xml:space="preserve"><tspan x="1003.30" font-size="8.30" stroke="#ececec" stroke-width="0.28" textLength="28.15" lengthAdjust="spacing">100 %  </tspan><tspan x="1031.45" font-size="7.80">通常</tspan></text></g>
<g fill="#ececec"><text y="610.30" xml:space="preserve"><tspan x="984.00" font-size="7.80">ケモ耳右内側</tspan></text></g>
<use href="#rul" x="1126.6" y="594.0"/>
<use href="#hdl" x="1144.5" y="600.1"/>
<use href="#eye" x="912.5" y="631.1"/>
<use href="#chk" x="931.6" y="631.5"/>
<rect x="958.2" y="618.7" width="19" height="26" rx="1" fill="url(#ck)" stroke="#4a4a4a" stroke-width="0.6"/>
<use href="#lty" transform="translate(987.7 618.6) scale(.92)"/>
<g fill="#ececec"><text y="628.20" xml:space="preserve"><tspan x="1003.30" font-size="8.30" stroke="#ececec" stroke-width="0.28" textLength="28.15" lengthAdjust="spacing">100 %  </tspan><tspan x="1031.45" font-size="7.80">通常</tspan></text></g>
<g fill="#ececec"><text y="641.70" xml:space="preserve"><tspan x="984.00" font-size="7.80">ケモ耳右</tspan></text></g>
<use href="#rul" x="1126.6" y="625.4"/>
<use href="#hdl" x="1144.5" y="631.5"/>
<use href="#eye" x="912.5" y="662.5"/>
<use href="#chk" x="931.6" y="662.9"/>
<rect x="958.2" y="650.1" width="19" height="26" rx="1" fill="url(#ck)" stroke="#4a4a4a" stroke-width="0.6"/>
<use href="#lty" transform="translate(987.7 650.0) scale(.92)"/>
<g fill="#ececec"><text y="659.60" xml:space="preserve"><tspan x="1003.30" font-size="8.30" stroke="#ececec" stroke-width="0.28" textLength="28.15" lengthAdjust="spacing">100 %  </tspan><tspan x="1031.45" font-size="7.80">通常</tspan></text></g>
<g fill="#ececec"><text y="673.10" xml:space="preserve"><tspan x="984.00" font-size="7.80">靴左</tspan></text></g>
<use href="#rul" x="1126.6" y="656.8"/>
<use href="#hdl" x="1144.5" y="662.9"/>
<use href="#eye" x="912.5" y="693.9"/>
<use href="#chk" x="931.6" y="694.3"/>
<rect x="958.2" y="681.5" width="19" height="26" rx="1" fill="url(#ck)" stroke="#4a4a4a" stroke-width="0.6"/>
<use href="#lty" transform="translate(987.7 681.4) scale(.92)"/>
<g fill="#ececec"><text y="691.00" xml:space="preserve"><tspan x="1003.30" font-size="8.30" stroke="#ececec" stroke-width="0.28" textLength="28.15" lengthAdjust="spacing">100 %  </tspan><tspan x="1031.45" font-size="7.80">通常</tspan></text></g>
<g fill="#ececec"><text y="704.50" xml:space="preserve"><tspan x="984.00" font-size="7.80">靴右</tspan></text></g>
<use href="#rul" x="1126.6" y="688.2"/>
<use href="#hdl" x="1144.5" y="694.3"/>
<use href="#eye" x="912.5" y="725.3"/>
<use href="#chk" x="931.6" y="725.7"/>
<rect x="958.2" y="712.9" width="19" height="26" rx="1" fill="url(#ck)" stroke="#4a4a4a" stroke-width="0.6"/>
<use href="#lty" transform="translate(987.7 712.8) scale(.92)"/>
<g fill="#ececec"><text y="722.40" xml:space="preserve"><tspan x="1003.30" font-size="8.30" stroke="#ececec" stroke-width="0.28" textLength="28.15" lengthAdjust="spacing">100 %  </tspan><tspan x="1031.45" font-size="7.80">通常</tspan></text></g>
<g fill="#ececec"><text y="735.90" xml:space="preserve"><tspan x="984.00" font-size="7.80">リボン</tspan></text></g>
<use href="#rul" x="1126.6" y="719.6"/>
<use href="#hdl" x="1144.5" y="725.7"/>
<use href="#eye" x="912.5" y="756.7"/>
<use href="#chk" x="931.6" y="757.1"/>
<rect x="958.2" y="744.3" width="19" height="26" rx="1" fill="url(#ck)" stroke="#4a4a4a" stroke-width="0.6"/>
<use href="#lty" transform="translate(987.7 744.2) scale(.92)"/>
<g fill="#ececec"><text y="753.80" xml:space="preserve"><tspan x="1003.30" font-size="8.30" stroke="#ececec" stroke-width="0.28" textLength="28.15" lengthAdjust="spacing">100 %  </tspan><tspan x="1031.45" font-size="7.80">通常</tspan></text></g>
<g fill="#ececec"><text y="767.30" xml:space="preserve"><tspan x="984.00" font-size="7.80">スカート下</tspan></text></g>
<use href="#rul" x="1126.6" y="751.0"/>
<use href="#hdl" x="1144.5" y="757.1"/>
<use href="#eye" x="912.5" y="788.1"/>
<use href="#chk" x="931.6" y="788.5"/>
<rect x="958.2" y="775.7" width="19" height="26" rx="1" fill="url(#ck)" stroke="#4a4a4a" stroke-width="0.6"/>
<use href="#lty" transform="translate(987.7 775.6) scale(.92)"/>
<g fill="#ececec"><text y="785.20" xml:space="preserve"><tspan x="1003.30" font-size="8.30" stroke="#ececec" stroke-width="0.28" textLength="28.15" lengthAdjust="spacing">100 %  </tspan><tspan x="1031.45" font-size="7.80">通常</tspan></text></g>
<g fill="#ececec"><text y="798.70" xml:space="preserve"><tspan x="984.00" font-size="7.80">スカート中</tspan></text></g>
<use href="#rul" x="1126.6" y="782.4"/>
<use href="#hdl" x="1144.5" y="788.5"/>
<use href="#eye" x="912.5" y="819.5"/>
<use href="#chk" x="931.6" y="819.9"/>
<rect x="958.2" y="807.1" width="19" height="26" rx="1" fill="url(#ck)" stroke="#4a4a4a" stroke-width="0.6"/>
<use href="#lty" transform="translate(987.7 807.0) scale(.92)"/>
<g fill="#ececec"><text y="816.60" xml:space="preserve"><tspan x="1003.30" font-size="8.30" stroke="#ececec" stroke-width="0.28" textLength="28.15" lengthAdjust="spacing">100 %  </tspan><tspan x="1031.45" font-size="7.80">通常</tspan></text></g>
<g fill="#ececec"><text y="830.10" xml:space="preserve"><tspan x="984.00" font-size="7.80">スカート上</tspan></text></g>
<use href="#rul" x="1126.6" y="813.8"/>
<use href="#hdl" x="1144.5" y="819.9"/>
<use href="#eye" x="912.5" y="850.9"/>
<use href="#chk" x="931.6" y="851.3"/>
<rect x="958.2" y="838.5" width="19" height="26" rx="1" fill="url(#ck)" stroke="#4a4a4a" stroke-width="0.6"/>
<use href="#lty" transform="translate(987.7 838.4) scale(.92)"/>
<g fill="#ececec"><text y="848.00" xml:space="preserve"><tspan x="1003.30" font-size="8.30" stroke="#ececec" stroke-width="0.28" textLength="28.15" lengthAdjust="spacing">100 %  </tspan><tspan x="1031.45" font-size="7.80">通常</tspan></text></g>
<g fill="#ececec"><text y="861.50" xml:space="preserve"><tspan x="984.00" font-size="7.80">右手</tspan></text></g>
<use href="#rul" x="1126.6" y="845.2"/>
<use href="#hdl" x="1144.5" y="851.3"/>
<use href="#eye" x="912.5" y="882.3"/>
<use href="#chk" x="931.6" y="882.7"/>
<rect x="958.2" y="869.9" width="19" height="26" rx="1" fill="url(#ck)" stroke="#4a4a4a" stroke-width="0.6"/>
<use href="#lty" transform="translate(987.7 869.8) scale(.92)"/>
<g fill="#ececec"><text y="879.40" xml:space="preserve"><tspan x="1003.30" font-size="8.30" stroke="#ececec" stroke-width="0.28" textLength="28.15" lengthAdjust="spacing">100 %  </tspan><tspan x="1031.45" font-size="7.80">通常</tspan></text></g>
<g fill="#ececec"><text y="892.90" xml:space="preserve"><tspan x="984.00" font-size="7.80">右腕</tspan></text></g>
<use href="#rul" x="1126.6" y="876.6"/>
<use href="#hdl" x="1144.5" y="882.7"/>
</svg>
</div>
</body></html>
